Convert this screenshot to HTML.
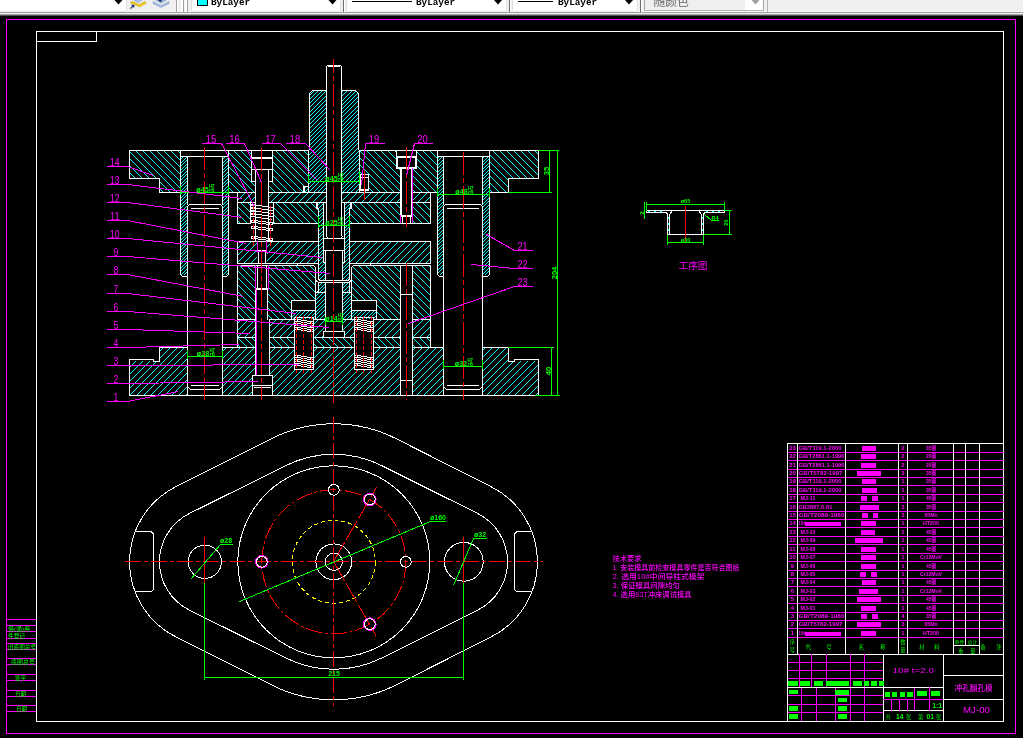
<!DOCTYPE html>
<html><head><meta charset="utf-8"><title>CAD</title>
<style>
html,body{margin:0;padding:0;background:#000;overflow:hidden}
svg{display:block;will-change:transform}
text{white-space:pre}
</style></head><body>
<svg width="1023" height="738" viewBox="0 0 1023 738" shape-rendering="crispEdges" fill="none">
<rect width="1023" height="738" fill="#000"/>
<defs><pattern id="h0" width="7" height="7" patternUnits="userSpaceOnUse"><path d="M6 0h1v1h-1zM0 1h1v1h-1zM1 2h1v1h-1zM2 3h1v1h-1zM3 4h1v1h-1zM4 5h1v1h-1zM5 6h1v1h-1z" fill="#0ff"/></pattern><pattern id="h1" width="7" height="7" patternUnits="userSpaceOnUse"><path d="M3 0h1v1h-1zM2 1h1v1h-1zM1 2h1v1h-1zM0 3h1v1h-1zM6 4h1v1h-1zM5 5h1v1h-1zM4 6h1v1h-1z" fill="#0ff"/></pattern><pattern id="h2" width="7" height="7" patternUnits="userSpaceOnUse"><path d="M3 0h1v1h-1zM4 1h1v1h-1zM5 2h1v1h-1zM6 3h1v1h-1zM0 4h1v1h-1zM1 5h1v1h-1zM2 6h1v1h-1z" fill="#0ff"/></pattern><pattern id="h3" width="7" height="7" patternUnits="userSpaceOnUse"><path d="M2 0h1v1h-1zM1 1h1v1h-1zM0 2h1v1h-1zM6 3h1v1h-1zM5 4h1v1h-1zM4 5h1v1h-1zM3 6h1v1h-1z" fill="#0ff"/></pattern><pattern id="h4" width="7" height="7" patternUnits="userSpaceOnUse"><path d="M2 0h1v1h-1zM3 1h1v1h-1zM4 2h1v1h-1zM5 3h1v1h-1zM6 4h1v1h-1zM0 5h1v1h-1zM1 6h1v1h-1z" fill="#0ff"/></pattern><pattern id="h5" width="7" height="7" patternUnits="userSpaceOnUse"><path d="M0 0h1v1h-1zM6 1h1v1h-1zM5 2h1v1h-1zM4 3h1v1h-1zM3 4h1v1h-1zM2 5h1v1h-1zM1 6h1v1h-1z" fill="#0ff"/></pattern><pattern id="h6" width="7" height="7" patternUnits="userSpaceOnUse"><path d="M5 0h1v1h-1zM6 1h1v1h-1zM0 2h1v1h-1zM1 3h1v1h-1zM2 4h1v1h-1zM3 5h1v1h-1zM4 6h1v1h-1z" fill="#0ff"/></pattern><pattern id="h7" width="7" height="7" patternUnits="userSpaceOnUse"><path d="M6 0h1v1h-1zM5 1h1v1h-1zM4 2h1v1h-1zM3 3h1v1h-1zM2 4h1v1h-1zM1 5h1v1h-1zM0 6h1v1h-1z" fill="#0ff"/></pattern><pattern id="h8" width="7" height="7" patternUnits="userSpaceOnUse"><path d="M0 0h1v1h-1zM3 0h1v1h-1zM6 1h1v1h-1zM2 1h1v1h-1zM5 2h1v1h-1zM1 2h1v1h-1zM4 3h1v1h-1zM0 3h1v1h-1zM3 4h1v1h-1zM6 4h1v1h-1zM2 5h1v1h-1zM5 5h1v1h-1zM1 6h1v1h-1zM4 6h1v1h-1z" fill="#0ff"/></pattern><pattern id="h9" width="21" height="21" patternUnits="userSpaceOnUse"><path d="M1 0h1v1h-1zM5 0h1v1h-1zM9 0h1v1h-1zM13 0h1v1h-1zM17 0h1v1h-1zM0 1h1v1h-1zM4 1h1v1h-1zM8 1h1v1h-1zM12 1h1v1h-1zM16 1h1v1h-1zM20 2h1v1h-1zM3 2h1v1h-1zM7 2h1v1h-1zM11 2h1v1h-1zM15 2h1v1h-1zM19 3h1v1h-1zM2 3h1v1h-1zM6 3h1v1h-1zM10 3h1v1h-1zM14 3h1v1h-1zM18 4h1v1h-1zM1 4h1v1h-1zM5 4h1v1h-1zM9 4h1v1h-1zM13 4h1v1h-1zM17 5h1v1h-1zM0 5h1v1h-1zM4 5h1v1h-1zM8 5h1v1h-1zM12 5h1v1h-1zM16 6h1v1h-1zM20 6h1v1h-1zM3 6h1v1h-1zM7 6h1v1h-1zM11 6h1v1h-1zM15 7h1v1h-1zM19 7h1v1h-1zM2 7h1v1h-1zM6 7h1v1h-1zM10 7h1v1h-1zM14 8h1v1h-1zM18 8h1v1h-1zM1 8h1v1h-1zM5 8h1v1h-1zM9 8h1v1h-1zM13 9h1v1h-1zM17 9h1v1h-1zM0 9h1v1h-1zM4 9h1v1h-1zM8 9h1v1h-1zM12 10h1v1h-1zM16 10h1v1h-1zM20 10h1v1h-1zM3 10h1v1h-1zM7 10h1v1h-1zM11 11h1v1h-1zM15 11h1v1h-1zM19 11h1v1h-1zM2 11h1v1h-1zM6 11h1v1h-1zM10 12h1v1h-1zM14 12h1v1h-1zM18 12h1v1h-1zM1 12h1v1h-1zM5 12h1v1h-1zM9 13h1v1h-1zM13 13h1v1h-1zM17 13h1v1h-1zM0 13h1v1h-1zM4 13h1v1h-1zM8 14h1v1h-1zM12 14h1v1h-1zM16 14h1v1h-1zM20 14h1v1h-1zM3 14h1v1h-1zM7 15h1v1h-1zM11 15h1v1h-1zM15 15h1v1h-1zM19 15h1v1h-1zM2 15h1v1h-1zM6 16h1v1h-1zM10 16h1v1h-1zM14 16h1v1h-1zM18 16h1v1h-1zM1 16h1v1h-1zM5 17h1v1h-1zM9 17h1v1h-1zM13 17h1v1h-1zM17 17h1v1h-1zM0 17h1v1h-1zM4 18h1v1h-1zM8 18h1v1h-1zM12 18h1v1h-1zM16 18h1v1h-1zM20 18h1v1h-1zM3 19h1v1h-1zM7 19h1v1h-1zM11 19h1v1h-1zM15 19h1v1h-1zM19 19h1v1h-1zM2 20h1v1h-1zM6 20h1v1h-1zM10 20h1v1h-1zM14 20h1v1h-1zM18 20h1v1h-1z" fill="#0ff"/></pattern><pattern id="h10" width="19" height="19" patternUnits="userSpaceOnUse"><path d="M2 0h1v1h-1zM5 0h1v1h-1zM9 0h1v1h-1zM13 0h1v1h-1zM17 0h1v1h-1zM1 1h1v1h-1zM4 1h1v1h-1zM8 1h1v1h-1zM12 1h1v1h-1zM16 1h1v1h-1zM0 2h1v1h-1zM3 2h1v1h-1zM7 2h1v1h-1zM11 2h1v1h-1zM15 2h1v1h-1zM18 3h1v1h-1zM2 3h1v1h-1zM6 3h1v1h-1zM10 3h1v1h-1zM14 3h1v1h-1zM17 4h1v1h-1zM1 4h1v1h-1zM5 4h1v1h-1zM9 4h1v1h-1zM13 4h1v1h-1zM16 5h1v1h-1zM0 5h1v1h-1zM4 5h1v1h-1zM8 5h1v1h-1zM12 5h1v1h-1zM15 6h1v1h-1zM18 6h1v1h-1zM3 6h1v1h-1zM7 6h1v1h-1zM11 6h1v1h-1zM14 7h1v1h-1zM17 7h1v1h-1zM2 7h1v1h-1zM6 7h1v1h-1zM10 7h1v1h-1zM13 8h1v1h-1zM16 8h1v1h-1zM1 8h1v1h-1zM5 8h1v1h-1zM9 8h1v1h-1zM12 9h1v1h-1zM15 9h1v1h-1zM0 9h1v1h-1zM4 9h1v1h-1zM8 9h1v1h-1zM11 10h1v1h-1zM14 10h1v1h-1zM18 10h1v1h-1zM3 10h1v1h-1zM7 10h1v1h-1zM10 11h1v1h-1zM13 11h1v1h-1zM17 11h1v1h-1zM2 11h1v1h-1zM6 11h1v1h-1zM9 12h1v1h-1zM12 12h1v1h-1zM16 12h1v1h-1zM1 12h1v1h-1zM5 12h1v1h-1zM8 13h1v1h-1zM11 13h1v1h-1zM15 13h1v1h-1zM0 13h1v1h-1zM4 13h1v1h-1zM7 14h1v1h-1zM10 14h1v1h-1zM14 14h1v1h-1zM18 14h1v1h-1zM3 14h1v1h-1zM6 15h1v1h-1zM9 15h1v1h-1zM13 15h1v1h-1zM17 15h1v1h-1zM2 15h1v1h-1zM5 16h1v1h-1zM8 16h1v1h-1zM12 16h1v1h-1zM16 16h1v1h-1zM1 16h1v1h-1zM4 17h1v1h-1zM7 17h1v1h-1zM11 17h1v1h-1zM15 17h1v1h-1zM0 17h1v1h-1zM3 18h1v1h-1zM6 18h1v1h-1zM10 18h1v1h-1zM14 18h1v1h-1zM18 18h1v1h-1z" fill="#0ff"/></pattern><pattern id="h11" width="19" height="19" patternUnits="userSpaceOnUse"><path d="M0 0h1v1h-1zM3 0h1v1h-1zM7 0h1v1h-1zM11 0h1v1h-1zM15 0h1v1h-1zM18 1h1v1h-1zM2 1h1v1h-1zM6 1h1v1h-1zM10 1h1v1h-1zM14 1h1v1h-1zM17 2h1v1h-1zM1 2h1v1h-1zM5 2h1v1h-1zM9 2h1v1h-1zM13 2h1v1h-1zM16 3h1v1h-1zM0 3h1v1h-1zM4 3h1v1h-1zM8 3h1v1h-1zM12 3h1v1h-1zM15 4h1v1h-1zM18 4h1v1h-1zM3 4h1v1h-1zM7 4h1v1h-1zM11 4h1v1h-1zM14 5h1v1h-1zM17 5h1v1h-1zM2 5h1v1h-1zM6 5h1v1h-1zM10 5h1v1h-1zM13 6h1v1h-1zM16 6h1v1h-1zM1 6h1v1h-1zM5 6h1v1h-1zM9 6h1v1h-1zM12 7h1v1h-1zM15 7h1v1h-1zM0 7h1v1h-1zM4 7h1v1h-1zM8 7h1v1h-1zM11 8h1v1h-1zM14 8h1v1h-1zM18 8h1v1h-1zM3 8h1v1h-1zM7 8h1v1h-1zM10 9h1v1h-1zM13 9h1v1h-1zM17 9h1v1h-1zM2 9h1v1h-1zM6 9h1v1h-1zM9 10h1v1h-1zM12 10h1v1h-1zM16 10h1v1h-1zM1 10h1v1h-1zM5 10h1v1h-1zM8 11h1v1h-1zM11 11h1v1h-1zM15 11h1v1h-1zM0 11h1v1h-1zM4 11h1v1h-1zM7 12h1v1h-1zM10 12h1v1h-1zM14 12h1v1h-1zM18 12h1v1h-1zM3 12h1v1h-1zM6 13h1v1h-1zM9 13h1v1h-1zM13 13h1v1h-1zM17 13h1v1h-1zM2 13h1v1h-1zM5 14h1v1h-1zM8 14h1v1h-1zM12 14h1v1h-1zM16 14h1v1h-1zM1 14h1v1h-1zM4 15h1v1h-1zM7 15h1v1h-1zM11 15h1v1h-1zM15 15h1v1h-1zM0 15h1v1h-1zM3 16h1v1h-1zM6 16h1v1h-1zM10 16h1v1h-1zM14 16h1v1h-1zM18 16h1v1h-1zM2 17h1v1h-1zM5 17h1v1h-1zM9 17h1v1h-1zM13 17h1v1h-1zM17 17h1v1h-1zM1 18h1v1h-1zM4 18h1v1h-1zM8 18h1v1h-1zM12 18h1v1h-1zM16 18h1v1h-1z" fill="#0ff"/></pattern></defs>
<rect x="0" y="0" width="1023" height="12" fill="#f0f0f0"/>
<rect x="0" y="11" width="1023" height="1" fill="#f8f8f8"/>
<rect x="0" y="12" width="1023" height="1" fill="#a0a0a0"/>
<rect x="0" y="13" width="1023" height="1" fill="#f0f0f0"/>
<rect x="0" y="14" width="1023" height="1" fill="#a4a4a4"/>
<rect x="0" y="15" width="1023" height="1" fill="#505050"/>
<rect x="0" y="0" width="126" height="11" fill="#fff"/>
<rect x="-1" y="0" width="1" height="11" fill="#d9dde6"/>
<rect x="126" y="0" width="1" height="11" fill="#e3e3e3"/>
<rect x="0" y="11" width="126" height="1" fill="#e9e9e9"/>
<path d="M114.5 0H122.5L118.5 4.5Z" fill="#000" shape-rendering="geometricPrecision"/>
<rect x="176" y="0" width="1" height="12" fill="#a0a0a0"/>
<rect x="177" y="0" width="1" height="12" fill="#fff"/>
<rect x="181" y="0" width="2" height="12" fill="#fff"/>
<rect x="183" y="0" width="1" height="12" fill="#a0a0a0"/>
<rect x="185" y="0" width="2" height="12" fill="#fff"/>
<rect x="187" y="0" width="1" height="12" fill="#a0a0a0"/>
<g shape-rendering="geometricPrecision"><path d="M132 -1L138 2.5L144 -1Z" fill="#a9c3e6" stroke="#6f8fc0" stroke-width=".5"/><path d="M130 2.6L132.5 1.6L139 4.4L145 1.6L146.2 3L140 6.9Z" fill="#f2d21f" stroke="#b79600" stroke-width=".5"/><path d="M130.4 8.6L133.6 5.4M131.4 5.2H133.8V7.6" stroke="#1c2f7a" stroke-width="1.1" fill="none"/><path d="M154 -1L161 3L168 -1Z" fill="#9db9de" stroke="#5b7cab" stroke-width=".5"/><path d="M153 1.6L161 5.4L169 1.6L169 3.6L161 7.6L153 3.6Z" fill="#c4d6ee" stroke="#6a8cc0" stroke-width=".5"/><path d="M153 2.6L161 6.4L169 2.6" stroke="#6a8cc0" stroke-width=".5" fill="none"/><path d="M158 0H162.4L160.2 2.2Z" fill="#1c2f7a"/></g>
<rect x="192" y="0" width="148" height="11" fill="#fff"/>
<rect x="191" y="0" width="1" height="11" fill="#d9dde6"/>
<rect x="340" y="0" width="1" height="11" fill="#e3e3e3"/>
<rect x="192" y="11" width="148" height="1" fill="#e9e9e9"/>
<rect x="197" y="0" width="11" height="6" fill="#000"/>
<rect x="198" y="0" width="9" height="5" fill="#0ff"/>
<text x="211" y="4.8" fill="#000" font-size="9.3" font-family="'Liberation Mono','Noto Sans CJK SC',monospace" text-anchor="start" font-weight="bold">ByLayer</text>
<path d="M328.5 0H336.5L332.5 4.5Z" fill="#000" shape-rendering="geometricPrecision"/>
<rect x="343" y="0" width="1" height="12" fill="#6d6d6d"/>
<rect x="344" y="0" width="1" height="12" fill="#fff"/>
<rect x="347" y="0" width="159" height="11" fill="#fff"/>
<rect x="346" y="0" width="1" height="11" fill="#d9dde6"/>
<rect x="506" y="0" width="1" height="11" fill="#e3e3e3"/>
<rect x="347" y="11" width="159" height="1" fill="#e9e9e9"/>
<rect x="352" y="1" width="60" height="1" fill="#000"/>
<text x="416" y="4.8" fill="#000" font-size="9.3" font-family="'Liberation Mono','Noto Sans CJK SC',monospace" text-anchor="start" font-weight="bold">ByLayer</text>
<path d="M494 0H502L498 4.5Z" fill="#000" shape-rendering="geometricPrecision"/>
<rect x="509" y="0" width="1" height="12" fill="#6d6d6d"/>
<rect x="510" y="0" width="1" height="12" fill="#fff"/>
<rect x="513" y="0" width="124" height="11" fill="#fff"/>
<rect x="512" y="0" width="1" height="11" fill="#d9dde6"/>
<rect x="637" y="0" width="1" height="11" fill="#e3e3e3"/>
<rect x="513" y="11" width="124" height="1" fill="#e9e9e9"/>
<rect x="518" y="1" width="35" height="1" fill="#000"/>
<text x="558" y="4.8" fill="#000" font-size="9.3" font-family="'Liberation Mono','Noto Sans CJK SC',monospace" text-anchor="start" font-weight="bold">ByLayer</text>
<path d="M625 0H633L629 4.5Z" fill="#000" shape-rendering="geometricPrecision"/>
<rect x="640" y="0" width="1" height="12" fill="#6d6d6d"/>
<rect x="641" y="0" width="1" height="12" fill="#fff"/>
<rect x="645" y="0" width="100" height="10" fill="#efefef"/>
<rect x="745" y="0" width="18" height="10" fill="#fff"/>
<rect x="644" y="0" width="1" height="11" fill="#a6a6a6"/>
<rect x="763" y="0" width="1" height="11" fill="#a6a6a6"/>
<rect x="644" y="10" width="120" height="1" fill="#b4b4b4"/>
<rect x="767" y="0" width="1" height="12" fill="#b4b4b4"/>
<text x="653.5" y="6.2" fill="#666" font-size="11.8" font-family="'Liberation Sans','Noto Sans CJK SC',sans-serif" text-anchor="start" opacity=".99">随颜色</text>
<path d="M751.5 0H759.5L755.5 4.5Z" fill="#a0a0a0" shape-rendering="geometricPrecision"/>
<path d="M6 19.5H1016" stroke="#f0f" stroke-width="1"/>
<path d="M6.5 19V734" stroke="#f0f" stroke-width="1"/>
<path d="M1015.5 19V734" stroke="#f0f" stroke-width="1"/>
<path d="M6 733.5H1016" stroke="#f0f" stroke-width="1"/>
<path d="M36 31.5H1004" stroke="#fff" stroke-width="1"/>
<path d="M36.5 31V722" stroke="#fff" stroke-width="1"/>
<path d="M1003.5 31V722" stroke="#fff" stroke-width="1"/>
<path d="M36 721.5H1004" stroke="#fff" stroke-width="1"/>
<path d="M36 41.5H97" stroke="#fff" stroke-width="1"/>
<path d="M96.5 31V42" stroke="#fff" stroke-width="1"/>
<path d="M7 619.5H36" stroke="#f0f" stroke-width="1"/>
<path d="M7 625.5H36" stroke="#f0f" stroke-width="1"/>
<path d="M7 631.5H36" stroke="#f0f" stroke-width="1"/>
<path d="M7 638.5H36" stroke="#f0f" stroke-width="1"/>
<path d="M7 643.5H36" stroke="#f0f" stroke-width="1"/>
<path d="M7 649.5H36" stroke="#f0f" stroke-width="1"/>
<path d="M7 658.5H36" stroke="#f0f" stroke-width="1"/>
<path d="M7 664.5H36" stroke="#f0f" stroke-width="1"/>
<path d="M7 674.5H36" stroke="#f0f" stroke-width="1"/>
<path d="M7 680.5H36" stroke="#f0f" stroke-width="1"/>
<path d="M7 690.5H36" stroke="#f0f" stroke-width="1"/>
<path d="M7 696.5H36" stroke="#f0f" stroke-width="1"/>
<path d="M7 705.5H36" stroke="#f0f" stroke-width="1"/>
<path d="M7 711.5H36" stroke="#f0f" stroke-width="1"/>
<text x="8" y="630.6" fill="#0f0" font-size="6.2" font-family="'Liberation Sans','Noto Sans CJK SC',sans-serif" text-anchor="start" textLength="22" lengthAdjust="spacingAndGlyphs">借(通)用</text>
<text x="8" y="637.6" fill="#0f0" font-size="6.2" font-family="'Liberation Sans','Noto Sans CJK SC',sans-serif" text-anchor="start" textLength="17" lengthAdjust="spacingAndGlyphs">件登记</text>
<text x="8" y="648.6" fill="#0f0" font-size="6.2" font-family="'Liberation Sans','Noto Sans CJK SC',sans-serif" text-anchor="start" textLength="28" lengthAdjust="spacingAndGlyphs">旧底图总号</text>
<text x="11" y="663.6" fill="#0f0" font-size="6.2" font-family="'Liberation Sans','Noto Sans CJK SC',sans-serif" text-anchor="start" textLength="24" lengthAdjust="spacingAndGlyphs">底图总号</text>
<text x="15" y="679.6" fill="#0f0" font-size="6.2" font-family="'Liberation Sans','Noto Sans CJK SC',sans-serif" text-anchor="start" textLength="11" lengthAdjust="spacingAndGlyphs">签字</text>
<text x="15" y="695.6" fill="#0f0" font-size="6.2" font-family="'Liberation Sans','Noto Sans CJK SC',sans-serif" text-anchor="start" textLength="11" lengthAdjust="spacingAndGlyphs">日期</text>
<text x="16" y="710.6" fill="#0f0" font-size="6.2" font-family="'Liberation Sans','Noto Sans CJK SC',sans-serif" text-anchor="start" textLength="11" lengthAdjust="spacingAndGlyphs">日期</text>
<rect x="130" y="151" width="408" height="41" fill="url(#h0)"/>
<rect x="100" y="179" width="59" height="15" fill="#000"/>
<rect x="509" y="179" width="51" height="15" fill="#000"/>
<rect x="180" y="150" width="49" height="43" fill="#000"/>
<rect x="437" y="150" width="53" height="43" fill="#000"/>
<rect x="251" y="150" width="22" height="31" fill="#000"/>
<rect x="255" y="181" width="14" height="12" fill="#000"/>
<rect x="396" y="150" width="21" height="18" fill="#000"/>
<rect x="400" y="168" width="13" height="25" fill="#000"/>
<rect x="308" y="150" width="52" height="43" fill="#000"/>
<rect x="303" y="186" width="6" height="7" fill="#000"/>
<rect x="360" y="174" width="9" height="16" fill="#000"/>
<rect x="238" y="193" width="192" height="9" fill="url(#h1)"/>
<rect x="255" y="192" width="14" height="11" fill="#000"/>
<rect x="326" y="192" width="16" height="11" fill="#000"/>
<rect x="400" y="192" width="13" height="11" fill="#000"/>
<rect x="238" y="203" width="192" height="20" fill="url(#h2)"/>
<rect x="250" y="202" width="24" height="22" fill="#000"/>
<rect x="316" y="202" width="37" height="7" fill="#000"/>
<rect x="318" y="208" width="32" height="16" fill="#000"/>
<rect x="400" y="202" width="13" height="22" fill="#000"/>
<rect x="238" y="242" width="192" height="21" fill="url(#h3)"/>
<rect x="257" y="241" width="10" height="23" fill="#000"/>
<rect x="318" y="241" width="32" height="23" fill="#000"/>
<rect x="238" y="266" width="192" height="53" fill="url(#h4)"/>
<rect x="255" y="265" width="13" height="55" fill="#000"/>
<rect x="315" y="265" width="37" height="55" fill="#000"/>
<rect x="291" y="300" width="86" height="20" fill="#000"/>
<rect x="400" y="265" width="13" height="55" fill="#000"/>
<rect x="294" y="317" width="20" height="3" fill="#000"/>
<rect x="354" y="317" width="20" height="3" fill="#000"/>
<rect x="238" y="320" width="192" height="17" fill="url(#h5)"/>
<rect x="238" y="338" width="192" height="9" fill="url(#h6)"/>
<rect x="130" y="348" width="408" height="47" fill="url(#h7)"/>
<rect x="100" y="340" width="59" height="21" fill="#000"/>
<rect x="100" y="340" width="53" height="19" fill="#000"/>
<rect x="509" y="340" width="51" height="21" fill="#000"/>
<rect x="515" y="340" width="45" height="19" fill="#000"/>
<rect x="187" y="347" width="36" height="49" fill="#000"/>
<rect x="443" y="347" width="40" height="49" fill="#000"/>
<rect x="256" y="319" width="14" height="57" fill="#000"/>
<rect x="252" y="375" width="21" height="21" fill="#000"/>
<rect x="294" y="319" width="20" height="51" fill="#000"/>
<rect x="354" y="319" width="20" height="51" fill="#000"/>
<rect x="400" y="319" width="13" height="77" fill="#000"/>
<rect x="325" y="319" width="18" height="13" fill="#000"/>
<rect x="323" y="331" width="22" height="7" fill="#000"/>
<rect x="181" y="157" width="6" height="118" fill="url(#h8)"/>
<rect x="223" y="157" width="5" height="118" fill="url(#h8)"/>
<rect x="438" y="157" width="5" height="118" fill="url(#h8)"/>
<rect x="483" y="157" width="6" height="118" fill="url(#h8)"/>
<rect x="310" y="91" width="16" height="59" fill="url(#h9)"/>
<rect x="342" y="91" width="16" height="59" fill="url(#h9)"/>
<rect x="309" y="150" width="17" height="42" fill="url(#h9)"/>
<rect x="342" y="150" width="17" height="42" fill="url(#h9)"/>
<rect x="305" y="187" width="4" height="5" fill="url(#h9)"/>
<rect x="319" y="203" width="4" height="77" fill="url(#h10)"/>
<rect x="345" y="203" width="4" height="77" fill="url(#h10)"/>
<rect x="317" y="203" width="2" height="5" fill="url(#h10)"/>
<rect x="349" y="203" width="2" height="5" fill="url(#h10)"/>
<rect x="323" y="263" width="2" height="17" fill="url(#h10)"/>
<rect x="343" y="263" width="2" height="17" fill="url(#h10)"/>
<rect x="318" y="283" width="7" height="9" fill="url(#h11)"/>
<rect x="343" y="283" width="7" height="9" fill="url(#h11)"/>
<rect x="316" y="292" width="9" height="19" fill="url(#h11)"/>
<rect x="343" y="292" width="8" height="19" fill="url(#h11)"/>
<rect x="292" y="311" width="33" height="8" fill="url(#h11)"/>
<rect x="343" y="311" width="33" height="8" fill="url(#h11)"/>
<path d="M180.5 150.5L129.5 150.5L129.5 178.5L159.5 178.5L159.5 192.5L180.5 192.5" stroke="#fff" stroke-width="1" fill="none"/>
<path d="M489.5 150.5L538.5 150.5L538.5 178.5L508.5 178.5L508.5 192.5L489.5 192.5" stroke="#fff" stroke-width="1" fill="none"/>
<path d="M228 150.5H309" stroke="#fff" stroke-width="1"/>
<path d="M359 150.5H438" stroke="#fff" stroke-width="1"/>
<path d="M180 150.5H229" stroke="#fff" stroke-width="1"/>
<path d="M437 150.5H490" stroke="#fff" stroke-width="1"/>
<path d="M228 192.5H438" stroke="#fff" stroke-width="1"/>
<path d="M180 156.5H229" stroke="#fff" stroke-width="1"/>
<path d="M180.5 150V275" stroke="#fff" stroke-width="1"/>
<path d="M228.5 150V275" stroke="#fff" stroke-width="1"/>
<path d="M180.5 274.5L182.5 276.5L187.5 276.5" stroke="#fff" stroke-width="1" fill="none"/>
<path d="M228.5 274.5L226.5 276.5L222.5 276.5" stroke="#fff" stroke-width="1" fill="none"/>
<path d="M187.5 156V205" stroke="#fff" stroke-width="1"/>
<path d="M222.5 156V205" stroke="#fff" stroke-width="1"/>
<path d="M187.5 395.5L187.5 206.5L189.5 204.5L220.5 204.5L222.5 206.5L222.5 395.5" stroke="#fff" stroke-width="1" fill="none"/>
<path d="M191 208.5H219" stroke="#fff" stroke-width="1"/>
<path d="M187.5 386.5L190.5 389.5L219.5 389.5L222.5 386.5" stroke="#fff" stroke-width="1" fill="none"/>
<path d="M191 385.5H219" stroke="#fff" stroke-width="1"/>
<path d="M437 156.5H490" stroke="#fff" stroke-width="1"/>
<path d="M437.5 150V275" stroke="#fff" stroke-width="1"/>
<path d="M489.5 150V275" stroke="#fff" stroke-width="1"/>
<path d="M437.5 274.5L439.5 276.5L443.5 276.5" stroke="#fff" stroke-width="1" fill="none"/>
<path d="M489.5 274.5L487.5 276.5L482.5 276.5" stroke="#fff" stroke-width="1" fill="none"/>
<path d="M443.5 156V205" stroke="#fff" stroke-width="1"/>
<path d="M482.5 156V205" stroke="#fff" stroke-width="1"/>
<path d="M443.5 395.5L443.5 206.5L445.5 204.5L480.5 204.5L482.5 206.5L482.5 395.5" stroke="#fff" stroke-width="1" fill="none"/>
<path d="M447 208.5H479" stroke="#fff" stroke-width="1"/>
<path d="M443.5 386.5L446.5 389.5L479.5 389.5L482.5 386.5" stroke="#fff" stroke-width="1" fill="none"/>
<path d="M447 385.5H479" stroke="#fff" stroke-width="1"/>
<path d="M308.5 192V150.5M309.5 150V93.5L312.5 90.5H326M342 90.5H355.5L358.5 93.5V150M359.5 150.5V192" stroke="#fff" stroke-width="1" fill="none"/>
<path d="M308.5 186.5L303.5 186.5L303.5 192.5" stroke="#fff" stroke-width="1" fill="none"/>
<path d="M304.5 187V193" stroke="#fff" stroke-width="1"/>
<path d="M360.5 174V191" stroke="#fff" stroke-width="1"/>
<path d="M368.5 174V191" stroke="#fff" stroke-width="1"/>
<path d="M360 174.5H369" stroke="#fff" stroke-width="1"/>
<path d="M360 190H369" stroke="#fff" stroke-width="2"/>
<path d="M360 177.5H369" stroke="#fff" stroke-width="1"/>
<path d="M251.5 150V182" stroke="#fff" stroke-width="1"/>
<path d="M272.5 150V182" stroke="#fff" stroke-width="1"/>
<path d="M251 158H273" stroke="#fff" stroke-width="2"/>
<path d="M251 169.5H273" stroke="#fff" stroke-width="1"/>
<path d="M251 181.5H256" stroke="#fff" stroke-width="1"/>
<path d="M268 181.5H273" stroke="#fff" stroke-width="1"/>
<path d="M255.5 169V242" stroke="#fff" stroke-width="1"/>
<path d="M268.5 169V242" stroke="#fff" stroke-width="1"/>
<path d="M396.5 150V169" stroke="#fff" stroke-width="1"/>
<path d="M416.5 150V169" stroke="#fff" stroke-width="1"/>
<path d="M396 157H417" stroke="#fff" stroke-width="2"/>
<path d="M396 168H417" stroke="#fff" stroke-width="2"/>
<path d="M397.5 157V169" stroke="#fff" stroke-width="1"/>
<path d="M415.5 157V169" stroke="#fff" stroke-width="1"/>
<path d="M401 168V216" stroke="#fff" stroke-width="2"/>
<path d="M411.5 168V216" stroke="#fff" stroke-width="1"/>
<path d="M412.5 168V216" stroke="#f0f" stroke-width="1"/>
<path d="M400 216H413" stroke="#fff" stroke-width="2"/>
<path d="M400.5 215V224" stroke="#f0f" stroke-width="1"/>
<path d="M412.5 215V224" stroke="#f0f" stroke-width="1"/>
<path d="M402.5 216V224" stroke="#fff" stroke-width="1"/>
<path d="M410.5 216V224" stroke="#fff" stroke-width="1"/>
<path d="M237.5 192V224" stroke="#fff" stroke-width="1"/>
<path d="M430.5 192V224" stroke="#fff" stroke-width="1"/>
<path d="M237 202.5H431" stroke="#fff" stroke-width="1"/>
<path d="M237 223.5H251" stroke="#fff" stroke-width="1"/>
<path d="M273 223.5H319" stroke="#fff" stroke-width="1"/>
<path d="M349 223.5H431" stroke="#fff" stroke-width="1"/>
<path d="M250.5 202V224" stroke="#fff" stroke-width="1"/>
<path d="M273.5 202V224" stroke="#fff" stroke-width="1"/>
<rect x="402" y="192" width="9" height="11" fill="#000"/>
<rect x="256" y="192" width="12" height="11" fill="#000"/>
<path d="M318.5 208.5L316.5 208.5L316.5 202.5" stroke="#fff" stroke-width="1" fill="none"/>
<path d="M349.5 208.5L351.5 208.5L351.5 202.5" stroke="#fff" stroke-width="1" fill="none"/>
<path d="M317.5 203V209" stroke="#fff" stroke-width="1"/>
<path d="M350.5 203V209" stroke="#fff" stroke-width="1"/>
<path d="M318.5 208V277.5Q318.5 280.5 321.5 280.5H346.5Q349.5 280.5 349.5 277.5V208" stroke="#fff" stroke-width="1" fill="none"/>
<path d="M323.5 202V263" stroke="#fff" stroke-width="1"/>
<path d="M344.5 202V263" stroke="#fff" stroke-width="1"/>
<path d="M323 238.5H345" stroke="#fff" stroke-width="1"/>
<path d="M323 250.5H345" stroke="#fff" stroke-width="1"/>
<path d="M323.5 262.5L325.5 262.5" stroke="#fff" stroke-width="1" fill="none"/>
<path d="M342.5 262.5L344.5 262.5" stroke="#fff" stroke-width="1" fill="none"/>
<path d="M325.5 250V281" stroke="#fff" stroke-width="1"/>
<path d="M342.5 250V281" stroke="#fff" stroke-width="1"/>
<path d="M325.5 283V332" stroke="#fff" stroke-width="1"/>
<path d="M342.5 283V332" stroke="#fff" stroke-width="1"/>
<rect x="323.5" y="331.5" width="21" height="6" stroke="#fff" stroke-width="1" fill="none"/>
<path d="M237.5 241V264" stroke="#fff" stroke-width="1"/>
<path d="M430.5 241V264" stroke="#fff" stroke-width="1"/>
<path d="M237 241.5H319" stroke="#fff" stroke-width="1"/>
<path d="M349 241.5H431" stroke="#fff" stroke-width="1"/>
<path d="M237 263.5H319" stroke="#fff" stroke-width="1"/>
<path d="M349 263.5H431" stroke="#fff" stroke-width="1"/>
<path d="M257.5 241V252" stroke="#f0f" stroke-width="1"/>
<path d="M266.5 241V252" stroke="#f0f" stroke-width="1"/>
<path d="M258 251H266" stroke="#fff" stroke-width="2"/>
<path d="M258.5 251V264" stroke="#fff" stroke-width="1"/>
<path d="M265.5 251V264" stroke="#fff" stroke-width="1"/>
<path d="M237.5 265V348" stroke="#fff" stroke-width="1"/>
<path d="M430.5 265V348" stroke="#fff" stroke-width="1"/>
<path d="M237 265.5H313" stroke="#fff" stroke-width="1"/>
<path d="M355 265.5H431" stroke="#fff" stroke-width="1"/>
<path d="M297.5 263V266" stroke="#fff" stroke-width="1"/>
<path d="M370.5 263V266" stroke="#fff" stroke-width="1"/>
<path d="M312 265.5Q315.5 265.5 315.5 269.5V319" stroke="#fff" stroke-width="1" fill="none"/>
<path d="M355 265.5Q351.5 265.5 351.5 269.5V319" stroke="#fff" stroke-width="1" fill="none"/>
<path d="M318.5 283V290Q318.5 292.5 316 292.5M316 292.5H325" stroke="#fff" stroke-width="1" fill="none"/>
<path d="M349.5 283V290Q349.5 292.5 351 292.5M351 292.5H343" stroke="#fff" stroke-width="1" fill="none"/>
<path d="M315.5 278Q316 282.5 320.5 282.5H347.5Q351 282.5 351.5 278" stroke="#fff" stroke-width="1" fill="none"/>
<rect x="291.5" y="300.5" width="24" height="10" stroke="#fff" stroke-width="1" fill="none"/>
<rect x="351.5" y="300.5" width="25" height="10" stroke="#fff" stroke-width="1" fill="none"/>
<path d="M291.5 310V320" stroke="#fff" stroke-width="1"/>
<path d="M376.5 310V320" stroke="#fff" stroke-width="1"/>
<path d="M237 319.5H431" stroke="#fff" stroke-width="1"/>
<path d="M237 337.5H431" stroke="#fff" stroke-width="1"/>
<path d="M159 347.5H509" stroke="#fff" stroke-width="1"/>
<rect x="256" y="319" width="13" height="30" fill="#000"/>
<rect x="295" y="319" width="18" height="30" fill="#000"/>
<rect x="355" y="319" width="18" height="30" fill="#000"/>
<rect x="401" y="319" width="11" height="30" fill="#000"/>
<rect x="326" y="319" width="16" height="12" fill="#000"/>
<rect x="188" y="347" width="34" height="2" fill="#000"/>
<rect x="444" y="347" width="38" height="2" fill="#000"/>
<path d="M255.5 265V290" stroke="#f0f" stroke-width="1"/>
<path d="M268.5 265V290" stroke="#f0f" stroke-width="1"/>
<path d="M257.5 265V290" stroke="#fff" stroke-width="1"/>
<path d="M266.5 265V290" stroke="#fff" stroke-width="1"/>
<path d="M256 289H268" stroke="#fff" stroke-width="2"/>
<path d="M255.5 290V376" stroke="#fff" stroke-width="1"/>
<path d="M256.5 290V376" stroke="#f0f" stroke-width="1"/>
<path d="M267.5 290V320" stroke="#fff" stroke-width="1"/>
<path d="M269.5 319V376" stroke="#fff" stroke-width="1"/>
<rect x="252.5" y="375.5" width="20" height="20" stroke="#fff" stroke-width="1" fill="none"/>
<path d="M252 385.5H273" stroke="#fff" stroke-width="1"/>
<path d="M254 387.5H271" stroke="#fff" stroke-width="1"/>
<path d="M400.5 265V396" stroke="#fff" stroke-width="1"/>
<path d="M412.5 265V396" stroke="#fff" stroke-width="1"/>
<path d="M400 294.5H413" stroke="#fff" stroke-width="1"/>
<path d="M400 380.5H413" stroke="#fff" stroke-width="1"/>
<path d="M187.5 347.5L159.5 347.5L159.5 361.5L153.5 361.5L153.5 359.5L129.5 359.5L129.5 395.5L538.5 395.5L538.5 359.5L514.5 359.5L514.5 361.5L508.5 361.5L508.5 347.5L482.5 347.5" stroke="#fff" stroke-width="1" fill="none"/>
<path d="M294.5 317V370" stroke="#fff" stroke-width="1"/>
<path d="M313.5 317V370" stroke="#fff" stroke-width="1"/>
<path d="M294 369.5H314" stroke="#fff" stroke-width="1"/>
<path d="M294 317.5H314" stroke="#fff" stroke-width="1"/>
<circle cx="296.1" cy="320.5" r="1.6" stroke="#fff" stroke-width="1" fill="none"/>
<circle cx="311.9" cy="322.5" r="1.6" stroke="#fff" stroke-width="1" fill="none"/>
<path d="M297.7 319.5L310.3 321.5" stroke="#fff" stroke-width="1"/>
<path d="M297.7 321.5L310.3 323.5" stroke="#fff" stroke-width="1"/>
<circle cx="296.1" cy="324.5" r="1.6" stroke="#fff" stroke-width="1" fill="none"/>
<circle cx="311.9" cy="326.5" r="1.6" stroke="#fff" stroke-width="1" fill="none"/>
<path d="M297.7 323.5L310.3 325.5" stroke="#fff" stroke-width="1"/>
<path d="M297.7 325.5L310.3 327.5" stroke="#fff" stroke-width="1"/>
<circle cx="296.1" cy="328.5" r="1.6" stroke="#fff" stroke-width="1" fill="none"/>
<circle cx="311.9" cy="330.5" r="1.6" stroke="#fff" stroke-width="1" fill="none"/>
<path d="M297.7 327.5L310.3 329.5" stroke="#fff" stroke-width="1"/>
<path d="M297.7 329.5L310.3 331.5" stroke="#fff" stroke-width="1"/>
<circle cx="296.1" cy="356.5" r="1.6" stroke="#fff" stroke-width="1" fill="none"/>
<circle cx="311.9" cy="358.5" r="1.6" stroke="#fff" stroke-width="1" fill="none"/>
<path d="M297.7 355.5L310.3 357.5" stroke="#fff" stroke-width="1"/>
<path d="M297.7 357.5L310.3 359.5" stroke="#fff" stroke-width="1"/>
<circle cx="296.1" cy="360.5" r="1.6" stroke="#fff" stroke-width="1" fill="none"/>
<circle cx="311.9" cy="362.5" r="1.6" stroke="#fff" stroke-width="1" fill="none"/>
<path d="M297.7 359.5L310.3 361.5" stroke="#fff" stroke-width="1"/>
<path d="M297.7 361.5L310.3 363.5" stroke="#fff" stroke-width="1"/>
<circle cx="296.1" cy="364.5" r="1.6" stroke="#fff" stroke-width="1" fill="none"/>
<circle cx="311.9" cy="366.5" r="1.6" stroke="#fff" stroke-width="1" fill="none"/>
<path d="M297.7 363.5L310.3 365.5" stroke="#fff" stroke-width="1"/>
<path d="M297.7 365.5L310.3 367.5" stroke="#fff" stroke-width="1"/>
<path d="M296.5 316V373" stroke="#f00" stroke-width="1" stroke-dasharray="4 2"/>
<path d="M303.5 316V373" stroke="#f00" stroke-width="1" stroke-dasharray="4 2"/>
<path d="M311.5 316V373" stroke="#f00" stroke-width="1" stroke-dasharray="4 2"/>
<path d="M354.5 317V370" stroke="#fff" stroke-width="1"/>
<path d="M373.5 317V370" stroke="#fff" stroke-width="1"/>
<path d="M354 369.5H374" stroke="#fff" stroke-width="1"/>
<path d="M354 317.5H374" stroke="#fff" stroke-width="1"/>
<circle cx="356.1" cy="320.5" r="1.6" stroke="#fff" stroke-width="1" fill="none"/>
<circle cx="371.9" cy="322.5" r="1.6" stroke="#fff" stroke-width="1" fill="none"/>
<path d="M357.7 319.5L370.3 321.5" stroke="#fff" stroke-width="1"/>
<path d="M357.7 321.5L370.3 323.5" stroke="#fff" stroke-width="1"/>
<circle cx="356.1" cy="324.5" r="1.6" stroke="#fff" stroke-width="1" fill="none"/>
<circle cx="371.9" cy="326.5" r="1.6" stroke="#fff" stroke-width="1" fill="none"/>
<path d="M357.7 323.5L370.3 325.5" stroke="#fff" stroke-width="1"/>
<path d="M357.7 325.5L370.3 327.5" stroke="#fff" stroke-width="1"/>
<circle cx="356.1" cy="328.5" r="1.6" stroke="#fff" stroke-width="1" fill="none"/>
<circle cx="371.9" cy="330.5" r="1.6" stroke="#fff" stroke-width="1" fill="none"/>
<path d="M357.7 327.5L370.3 329.5" stroke="#fff" stroke-width="1"/>
<path d="M357.7 329.5L370.3 331.5" stroke="#fff" stroke-width="1"/>
<circle cx="356.1" cy="356.5" r="1.6" stroke="#fff" stroke-width="1" fill="none"/>
<circle cx="371.9" cy="358.5" r="1.6" stroke="#fff" stroke-width="1" fill="none"/>
<path d="M357.7 355.5L370.3 357.5" stroke="#fff" stroke-width="1"/>
<path d="M357.7 357.5L370.3 359.5" stroke="#fff" stroke-width="1"/>
<circle cx="356.1" cy="360.5" r="1.6" stroke="#fff" stroke-width="1" fill="none"/>
<circle cx="371.9" cy="362.5" r="1.6" stroke="#fff" stroke-width="1" fill="none"/>
<path d="M357.7 359.5L370.3 361.5" stroke="#fff" stroke-width="1"/>
<path d="M357.7 361.5L370.3 363.5" stroke="#fff" stroke-width="1"/>
<circle cx="356.1" cy="364.5" r="1.6" stroke="#fff" stroke-width="1" fill="none"/>
<circle cx="371.9" cy="366.5" r="1.6" stroke="#fff" stroke-width="1" fill="none"/>
<path d="M357.7 363.5L370.3 365.5" stroke="#fff" stroke-width="1"/>
<path d="M357.7 365.5L370.3 367.5" stroke="#fff" stroke-width="1"/>
<path d="M356.5 316V373" stroke="#f00" stroke-width="1" stroke-dasharray="4 2"/>
<path d="M363.5 316V373" stroke="#f00" stroke-width="1" stroke-dasharray="4 2"/>
<path d="M371.5 316V373" stroke="#f00" stroke-width="1" stroke-dasharray="4 2"/>
<path d="M251.5 204.5L272.5 207.5" stroke="#fff" stroke-width="1"/>
<path d="M251.5 207.5L272.5 210.5" stroke="#fff" stroke-width="1"/>
<path d="M251.5 210.5L272.5 213.5" stroke="#fff" stroke-width="1"/>
<path d="M251.5 213.5L272.5 216.5" stroke="#fff" stroke-width="1"/>
<path d="M251.5 216.5L272.5 219.5" stroke="#fff" stroke-width="1"/>
<path d="M251 205.5H256" stroke="#fff" stroke-width="1"/>
<path d="M268 207.5H274" stroke="#fff" stroke-width="1"/>
<path d="M251 208.5H256" stroke="#fff" stroke-width="1"/>
<path d="M268 210.5H274" stroke="#fff" stroke-width="1"/>
<path d="M251 211.5H256" stroke="#fff" stroke-width="1"/>
<path d="M268 213.5H274" stroke="#fff" stroke-width="1"/>
<path d="M251 214.5H256" stroke="#fff" stroke-width="1"/>
<path d="M268 216.5H274" stroke="#fff" stroke-width="1"/>
<circle cx="253.1" cy="221.5" r="1.6" stroke="#fff" stroke-width="1" fill="none"/>
<circle cx="270.9" cy="223.5" r="1.6" stroke="#fff" stroke-width="1" fill="none"/>
<path d="M254.7 220.5L269.3 222.5" stroke="#fff" stroke-width="1"/>
<path d="M254.7 222.5L269.3 224.5" stroke="#fff" stroke-width="1"/>
<circle cx="253.1" cy="227.5" r="1.6" stroke="#fff" stroke-width="1" fill="none"/>
<circle cx="270.9" cy="229.5" r="1.6" stroke="#fff" stroke-width="1" fill="none"/>
<path d="M254.7 226.5L269.3 228.5" stroke="#fff" stroke-width="1"/>
<path d="M254.7 228.5L269.3 230.5" stroke="#fff" stroke-width="1"/>
<circle cx="253.1" cy="237.5" r="1.6" stroke="#fff" stroke-width="1" fill="none"/>
<circle cx="270.9" cy="239.5" r="1.6" stroke="#fff" stroke-width="1" fill="none"/>
<path d="M254.7 236.5L269.3 238.5" stroke="#fff" stroke-width="1"/>
<path d="M254.7 238.5L269.3 240.5" stroke="#fff" stroke-width="1"/>
<path d="M253.5 206V247" stroke="#f00" stroke-width="1" stroke-dasharray="4 2"/>
<path d="M270.5 206V247" stroke="#f00" stroke-width="1" stroke-dasharray="4 2"/>
<rect x="327" y="150" width="14" height="86" fill="#000"/>
<path d="M326.5 236V67.5Q326.5 65.5 328.5 65.5H339.5Q341.5 65.5 341.5 67.5V236M328 66.5H340" stroke="#fff" stroke-width="1" fill="none"/>
<path d="M326.5 236.5L328.5 238.5L340.5 238.5L342.5 236.5" stroke="#fff" stroke-width="1" fill="none"/>
<path d="M333.5 59V403" stroke="#f00" stroke-width="1" stroke-dasharray="23 3 5 3" stroke-dashoffset="9"/>
<path d="M204.5 147V400" stroke="#f00" stroke-width="1" stroke-dasharray="23 3 5 3"/>
<path d="M463.5 152V400" stroke="#f00" stroke-width="1" stroke-dasharray="23 3 5 3"/>
<path d="M261.5 148V400" stroke="#f00" stroke-width="1" stroke-dasharray="23 3 5 3"/>
<path d="M406.5 147V227" stroke="#f00" stroke-width="1" stroke-dasharray="23 3 5 3"/>
<path d="M406.5 263V400" stroke="#f00" stroke-width="1" stroke-dasharray="23 3 5 3"/>
<path d="M364.5 170V200" stroke="#f00" stroke-width="1"/>
<path d="M180 192.5H229" stroke="#0f0" stroke-width="1"/>
<path d="M180.5 186V195" stroke="#0f0" stroke-width="1"/>
<path d="M228.5 186V195" stroke="#0f0" stroke-width="1"/>
<text x="202.5" y="192" fill="#0f0" font-size="7.6" font-family="'Liberation Sans','Noto Sans CJK SC',sans-serif" text-anchor="middle" font-weight="bold" textLength="12.3" lengthAdjust="spacingAndGlyphs">ø45</text>
<text x="208.95" y="188" fill="#0f0" font-size="5" font-family="'Liberation Sans','Noto Sans CJK SC',sans-serif" text-anchor="start" font-weight="bold" textLength="5.5" lengthAdjust="spacingAndGlyphs">H7</text>
<text x="208.95" y="192" fill="#0f0" font-size="5" font-family="'Liberation Sans','Noto Sans CJK SC',sans-serif" text-anchor="start" font-weight="bold" textLength="5.5" lengthAdjust="spacingAndGlyphs">r6</text>
<path d="M437 194.5H490" stroke="#0f0" stroke-width="1"/>
<path d="M437.5 188V197" stroke="#0f0" stroke-width="1"/>
<path d="M489.5 188V197" stroke="#0f0" stroke-width="1"/>
<text x="461.5" y="194" fill="#0f0" font-size="7.6" font-family="'Liberation Sans','Noto Sans CJK SC',sans-serif" text-anchor="middle" font-weight="bold" textLength="12.3" lengthAdjust="spacingAndGlyphs">ø48</text>
<text x="467.95" y="190" fill="#0f0" font-size="5" font-family="'Liberation Sans','Noto Sans CJK SC',sans-serif" text-anchor="start" font-weight="bold" textLength="5.5" lengthAdjust="spacingAndGlyphs">H7</text>
<text x="467.95" y="194" fill="#0f0" font-size="5" font-family="'Liberation Sans','Noto Sans CJK SC',sans-serif" text-anchor="start" font-weight="bold" textLength="5.5" lengthAdjust="spacingAndGlyphs">r6</text>
<path d="M187 356.5H223" stroke="#0f0" stroke-width="1"/>
<path d="M187.5 350V359" stroke="#0f0" stroke-width="1"/>
<path d="M222.5 350V359" stroke="#0f0" stroke-width="1"/>
<text x="203" y="356" fill="#0f0" font-size="7.6" font-family="'Liberation Sans','Noto Sans CJK SC',sans-serif" text-anchor="middle" font-weight="bold" textLength="12.3" lengthAdjust="spacingAndGlyphs">ø28</text>
<text x="209.45" y="352" fill="#0f0" font-size="5" font-family="'Liberation Sans','Noto Sans CJK SC',sans-serif" text-anchor="start" font-weight="bold" textLength="5.5" lengthAdjust="spacingAndGlyphs">H7</text>
<text x="209.45" y="356" fill="#0f0" font-size="5" font-family="'Liberation Sans','Noto Sans CJK SC',sans-serif" text-anchor="start" font-weight="bold" textLength="5.5" lengthAdjust="spacingAndGlyphs">r6</text>
<path d="M443 366.5H483" stroke="#0f0" stroke-width="1"/>
<path d="M443.5 360V369" stroke="#0f0" stroke-width="1"/>
<path d="M482.5 360V369" stroke="#0f0" stroke-width="1"/>
<text x="461" y="366" fill="#0f0" font-size="7.6" font-family="'Liberation Sans','Noto Sans CJK SC',sans-serif" text-anchor="middle" font-weight="bold" textLength="12.3" lengthAdjust="spacingAndGlyphs">ø32</text>
<text x="467.45" y="362" fill="#0f0" font-size="5" font-family="'Liberation Sans','Noto Sans CJK SC',sans-serif" text-anchor="start" font-weight="bold" textLength="5.5" lengthAdjust="spacingAndGlyphs">H7</text>
<text x="467.45" y="366" fill="#0f0" font-size="5" font-family="'Liberation Sans','Noto Sans CJK SC',sans-serif" text-anchor="start" font-weight="bold" textLength="5.5" lengthAdjust="spacingAndGlyphs">r6</text>
<path d="M308 181.5H360" stroke="#0f0" stroke-width="1"/>
<path d="M308.5 174V183" stroke="#0f0" stroke-width="1"/>
<path d="M359.5 171V184" stroke="#0f0" stroke-width="1"/>
<text x="331.5" y="181" fill="#0f0" font-size="7.6" font-family="'Liberation Sans','Noto Sans CJK SC',sans-serif" text-anchor="middle" font-weight="bold" textLength="12.3" lengthAdjust="spacingAndGlyphs">ø45</text>
<text x="337.95" y="177" fill="#0f0" font-size="5" font-family="'Liberation Sans','Noto Sans CJK SC',sans-serif" text-anchor="start" font-weight="bold" textLength="5.5" lengthAdjust="spacingAndGlyphs">H7</text>
<text x="337.95" y="181" fill="#0f0" font-size="5" font-family="'Liberation Sans','Noto Sans CJK SC',sans-serif" text-anchor="start" font-weight="bold" textLength="5.5" lengthAdjust="spacingAndGlyphs">r6</text>
<path d="M318 225.5H350" stroke="#0f0" stroke-width="1"/>
<path d="M318.5 216V228" stroke="#0f0" stroke-width="1"/>
<path d="M349.5 216V228" stroke="#0f0" stroke-width="1"/>
<text x="331.5" y="225" fill="#0f0" font-size="7.6" font-family="'Liberation Sans','Noto Sans CJK SC',sans-serif" text-anchor="middle" font-weight="bold" textLength="12.3" lengthAdjust="spacingAndGlyphs">ø25</text>
<text x="337.95" y="221" fill="#0f0" font-size="5" font-family="'Liberation Sans','Noto Sans CJK SC',sans-serif" text-anchor="start" font-weight="bold" textLength="5.5" lengthAdjust="spacingAndGlyphs">H7</text>
<text x="337.95" y="225" fill="#0f0" font-size="5" font-family="'Liberation Sans','Noto Sans CJK SC',sans-serif" text-anchor="start" font-weight="bold" textLength="5.5" lengthAdjust="spacingAndGlyphs">r6</text>
<path d="M325 321.5H343" stroke="#0f0" stroke-width="1"/>
<path d="M325.5 317V325" stroke="#0f0" stroke-width="1"/>
<path d="M342.5 317V325" stroke="#0f0" stroke-width="1"/>
<text x="331.5" y="321" fill="#0f0" font-size="7.6" font-family="'Liberation Sans','Noto Sans CJK SC',sans-serif" text-anchor="middle" font-weight="bold" textLength="12.3" lengthAdjust="spacingAndGlyphs">ø14</text>
<text x="337.95" y="317" fill="#0f0" font-size="5" font-family="'Liberation Sans','Noto Sans CJK SC',sans-serif" text-anchor="start" font-weight="bold" textLength="5.5" lengthAdjust="spacingAndGlyphs">H7</text>
<text x="337.95" y="321" fill="#0f0" font-size="5" font-family="'Liberation Sans','Noto Sans CJK SC',sans-serif" text-anchor="start" font-weight="bold" textLength="5.5" lengthAdjust="spacingAndGlyphs">r6</text>
<path d="M538 150.5H559" stroke="#0f0" stroke-width="1"/>
<path d="M508 192.5H552" stroke="#0f0" stroke-width="1"/>
<path d="M508 347.5H554" stroke="#0f0" stroke-width="1"/>
<path d="M535 395.5H560" stroke="#0f0" stroke-width="1"/>
<path d="M549.5 150V193" stroke="#0f0" stroke-width="1"/>
<path d="M557.5 150V396" stroke="#0f0" stroke-width="1"/>
<path d="M551.5 347V396" stroke="#0f0" stroke-width="1"/>
<text x="549" y="171" fill="#0f0" font-size="7.6" font-family="'Liberation Sans','Noto Sans CJK SC',sans-serif" text-anchor="middle" font-weight="bold" transform="rotate(-90 549 171)">35</text>
<text x="556.5" y="273" fill="#0f0" font-size="7.6" font-family="'Liberation Sans','Noto Sans CJK SC',sans-serif" text-anchor="middle" font-weight="bold" transform="rotate(-90 556.5 273)">204</text>
<text x="550.5" y="371" fill="#0f0" font-size="7.6" font-family="'Liberation Sans','Noto Sans CJK SC',sans-serif" text-anchor="middle" font-weight="bold" transform="rotate(-90 550.5 371)">40</text>
<path d="M107 166.5H128" stroke="#f0f" stroke-width="1"/>
<path d="M127.5 166.5L153.5 175.5" stroke="#f0f" stroke-width="1"/>
<text x="114.8" y="165.7" fill="#f0f" font-size="10.4" font-family="'Liberation Sans','Noto Sans CJK SC',sans-serif" text-anchor="middle" textLength="9.6" lengthAdjust="spacingAndGlyphs">14</text>
<path d="M107 184.5H128" stroke="#f0f" stroke-width="1"/>
<path d="M127.5 184.5L242.5 198.5" stroke="#f0f" stroke-width="1"/>
<text x="114.8" y="183.7" fill="#f0f" font-size="10.4" font-family="'Liberation Sans','Noto Sans CJK SC',sans-serif" text-anchor="middle" textLength="9.6" lengthAdjust="spacingAndGlyphs">13</text>
<path d="M107 202.5H128" stroke="#f0f" stroke-width="1"/>
<path d="M127.5 202.5L242.5 217.5" stroke="#f0f" stroke-width="1"/>
<text x="114.8" y="201.7" fill="#f0f" font-size="10.4" font-family="'Liberation Sans','Noto Sans CJK SC',sans-serif" text-anchor="middle" textLength="9.6" lengthAdjust="spacingAndGlyphs">12</text>
<path d="M107 220.5H128" stroke="#f0f" stroke-width="1"/>
<path d="M127.5 220.5L246.5 243.5" stroke="#f0f" stroke-width="1"/>
<text x="114.8" y="219.7" fill="#f0f" font-size="10.4" font-family="'Liberation Sans','Noto Sans CJK SC',sans-serif" text-anchor="middle" textLength="9.6" lengthAdjust="spacingAndGlyphs">11</text>
<path d="M107 238.5H128" stroke="#f0f" stroke-width="1"/>
<path d="M127.5 238.5L322.5 257.5" stroke="#f0f" stroke-width="1"/>
<text x="114.8" y="237.7" fill="#f0f" font-size="10.4" font-family="'Liberation Sans','Noto Sans CJK SC',sans-serif" text-anchor="middle" textLength="9.6" lengthAdjust="spacingAndGlyphs">10</text>
<path d="M107 256.5H128" stroke="#f0f" stroke-width="1"/>
<path d="M127.5 256.5L330.5 273.5" stroke="#f0f" stroke-width="1"/>
<text x="115.8" y="255.7" fill="#f0f" font-size="10.4" font-family="'Liberation Sans','Noto Sans CJK SC',sans-serif" text-anchor="middle" textLength="4.8" lengthAdjust="spacingAndGlyphs">9</text>
<path d="M107 274.5H128" stroke="#f0f" stroke-width="1"/>
<path d="M127.5 274.5L243.5 296.5" stroke="#f0f" stroke-width="1"/>
<text x="115.8" y="273.7" fill="#f0f" font-size="10.4" font-family="'Liberation Sans','Noto Sans CJK SC',sans-serif" text-anchor="middle" textLength="4.8" lengthAdjust="spacingAndGlyphs">8</text>
<path d="M107 293.5H128" stroke="#f0f" stroke-width="1"/>
<path d="M127.5 293.5L296.5 313.5" stroke="#f0f" stroke-width="1"/>
<text x="115.8" y="292.7" fill="#f0f" font-size="10.4" font-family="'Liberation Sans','Noto Sans CJK SC',sans-serif" text-anchor="middle" textLength="4.8" lengthAdjust="spacingAndGlyphs">7</text>
<path d="M107 311.5H128" stroke="#f0f" stroke-width="1"/>
<path d="M127.5 311.5L329.5 327.5" stroke="#f0f" stroke-width="1"/>
<text x="115.8" y="310.7" fill="#f0f" font-size="10.4" font-family="'Liberation Sans','Noto Sans CJK SC',sans-serif" text-anchor="middle" textLength="4.8" lengthAdjust="spacingAndGlyphs">6</text>
<path d="M107 329.5H128" stroke="#f0f" stroke-width="1"/>
<path d="M127.5 329.5L250.5 333.5" stroke="#f0f" stroke-width="1"/>
<text x="115.8" y="328.7" fill="#f0f" font-size="10.4" font-family="'Liberation Sans','Noto Sans CJK SC',sans-serif" text-anchor="middle" textLength="4.8" lengthAdjust="spacingAndGlyphs">5</text>
<path d="M107 347.5H128" stroke="#f0f" stroke-width="1"/>
<path d="M127.5 347.5L239.5 344.5" stroke="#f0f" stroke-width="1"/>
<text x="115.8" y="346.7" fill="#f0f" font-size="10.4" font-family="'Liberation Sans','Noto Sans CJK SC',sans-serif" text-anchor="middle" textLength="4.8" lengthAdjust="spacingAndGlyphs">4</text>
<path d="M107 365.5H128" stroke="#f0f" stroke-width="1"/>
<path d="M127.5 365.5L299.5 364.5" stroke="#f0f" stroke-width="1"/>
<text x="115.8" y="364.7" fill="#f0f" font-size="10.4" font-family="'Liberation Sans','Noto Sans CJK SC',sans-serif" text-anchor="middle" textLength="4.8" lengthAdjust="spacingAndGlyphs">3</text>
<path d="M107 383.5H128" stroke="#f0f" stroke-width="1"/>
<path d="M127.5 383.5L258.5 381.5" stroke="#f0f" stroke-width="1"/>
<text x="115.8" y="382.7" fill="#f0f" font-size="10.4" font-family="'Liberation Sans','Noto Sans CJK SC',sans-serif" text-anchor="middle" textLength="4.8" lengthAdjust="spacingAndGlyphs">2</text>
<path d="M107 401.5H128" stroke="#f0f" stroke-width="1"/>
<path d="M127.5 401.5L178.5 391.5" stroke="#f0f" stroke-width="1"/>
<text x="115.8" y="400.7" fill="#f0f" font-size="10.4" font-family="'Liberation Sans','Noto Sans CJK SC',sans-serif" text-anchor="middle" textLength="4.8" lengthAdjust="spacingAndGlyphs">1</text>
<path d="M202 143.5H222" stroke="#f0f" stroke-width="1"/>
<path d="M221.5 143.5L254.5 206.5" stroke="#f0f" stroke-width="1"/>
<text x="211" y="143" fill="#f0f" font-size="10.4" font-family="'Liberation Sans','Noto Sans CJK SC',sans-serif" text-anchor="middle" textLength="10.5" lengthAdjust="spacingAndGlyphs">15</text>
<path d="M226 143.5H245" stroke="#f0f" stroke-width="1"/>
<path d="M244.5 143.5L261.5 182.5" stroke="#f0f" stroke-width="1"/>
<text x="234.5" y="143" fill="#f0f" font-size="10.4" font-family="'Liberation Sans','Noto Sans CJK SC',sans-serif" text-anchor="middle" textLength="10.5" lengthAdjust="spacingAndGlyphs">16</text>
<path d="M262 143.5H281" stroke="#f0f" stroke-width="1"/>
<path d="M280.5 143.5L317.5 180.5" stroke="#f0f" stroke-width="1"/>
<text x="270.5" y="143" fill="#f0f" font-size="10.4" font-family="'Liberation Sans','Noto Sans CJK SC',sans-serif" text-anchor="middle" textLength="10.5" lengthAdjust="spacingAndGlyphs">17</text>
<path d="M286 143.5H306" stroke="#f0f" stroke-width="1"/>
<path d="M305.5 143.5L330.5 170.5" stroke="#f0f" stroke-width="1"/>
<text x="295" y="143" fill="#f0f" font-size="10.4" font-family="'Liberation Sans','Noto Sans CJK SC',sans-serif" text-anchor="middle" textLength="10.5" lengthAdjust="spacingAndGlyphs">18</text>
<path d="M365 143.5H385" stroke="#f0f" stroke-width="1"/>
<path d="M365.5 143.5L361.5 185.5" stroke="#f0f" stroke-width="1"/>
<text x="374" y="143" fill="#f0f" font-size="10.4" font-family="'Liberation Sans','Noto Sans CJK SC',sans-serif" text-anchor="middle" textLength="10.5" lengthAdjust="spacingAndGlyphs">19</text>
<path d="M414 143.5H433" stroke="#f0f" stroke-width="1"/>
<path d="M414.5 143.5L406.5 175.5" stroke="#f0f" stroke-width="1"/>
<text x="422.5" y="143" fill="#f0f" font-size="10.4" font-family="'Liberation Sans','Noto Sans CJK SC',sans-serif" text-anchor="middle" textLength="10.5" lengthAdjust="spacingAndGlyphs">20</text>
<path d="M514 250.5H533" stroke="#f0f" stroke-width="1"/>
<path d="M514.5 250.5L486.5 234.5" stroke="#f0f" stroke-width="1"/>
<text x="522.5" y="250" fill="#f0f" font-size="10.4" font-family="'Liberation Sans','Noto Sans CJK SC',sans-serif" text-anchor="middle" textLength="10" lengthAdjust="spacingAndGlyphs">21</text>
<path d="M514 268.5H533" stroke="#f0f" stroke-width="1"/>
<path d="M514.5 268.5L471.5 264.5" stroke="#f0f" stroke-width="1"/>
<text x="522.5" y="268" fill="#f0f" font-size="10.4" font-family="'Liberation Sans','Noto Sans CJK SC',sans-serif" text-anchor="middle" textLength="10" lengthAdjust="spacingAndGlyphs">22</text>
<path d="M514 286.5H533" stroke="#f0f" stroke-width="1"/>
<path d="M514.5 286.5L408.5 323.5" stroke="#f0f" stroke-width="1"/>
<text x="522.5" y="286" fill="#f0f" font-size="10.4" font-family="'Liberation Sans','Noto Sans CJK SC',sans-serif" text-anchor="middle" textLength="10" lengthAdjust="spacingAndGlyphs">23</text>
<path d="M272.09 438.37L175.94 486.67A84 84 0 0 0 175.94 636.93L272.09 685.23A138 138 0 0 0 395.51 685.23L491.06 636.93A84 84 0 0 0 491.06 486.67L395.51 438.37A138 138 0 0 0 272.09 438.37Z" stroke="#fff" stroke-width="1" fill="none"/>
<path d="M285.73 465.65L189.35 513.5A54 54 0 0 0 189.35 610.1L285.73 657.95A107.5 107.5 0 0 0 381.87 657.95L477.65 610.1A54 54 0 0 0 477.65 513.5L381.87 465.65A107.5 107.5 0 0 0 285.73 465.65Z" stroke="#fff" stroke-width="1" fill="none"/>
<circle cx="333.8" cy="561.8" r="96" stroke="#fff" stroke-width="1" fill="none"/>
<circle cx="333.8" cy="561.8" r="17.9" stroke="#fff" stroke-width="1" fill="none"/>
<circle cx="333.8" cy="561.8" r="8.6" stroke="#fff" stroke-width="1" fill="none"/>
<circle cx="204.8" cy="561.8" r="16.6" stroke="#fff" stroke-width="1" fill="none"/>
<circle cx="463.8" cy="561.8" r="19.4" stroke="#fff" stroke-width="1" fill="none"/>
<path d="M135.04 531.5H149.5Q153.5 531.5 153.5 535.5V587.5Q153.5 591.5 149.5 591.5H135.04" stroke="#fff" stroke-width="1" fill="none"/>
<path d="M531.96 531.5H518.5Q514.5 531.5 514.5 535.5V587.5Q514.5 591.5 518.5 591.5H531.96" stroke="#fff" stroke-width="1" fill="none"/>
<circle cx="333.8" cy="561.8" r="72" stroke="#f00" stroke-width="1" fill="none" stroke-dasharray="16 3 3 3"/>
<circle cx="333.8" cy="561.8" r="41.5" stroke="#ff0" stroke-width="1" fill="none" stroke-dasharray="4 3"/>
<path d="M125 561.5H543" stroke="#f00" stroke-width="1" stroke-dasharray="16 3 4 3"/>
<path d="M333.5 417V706" stroke="#f00" stroke-width="1" stroke-dasharray="16 3 4 3"/>
<path d="M204.5 537V584" stroke="#f00" stroke-width="1"/>
<path d="M463.5 537V584" stroke="#f00" stroke-width="1"/>
<path d="M333.5 561.5L376.5 487.5" stroke="#f00" stroke-width="1" stroke-dasharray="22 3"/>
<path d="M333.5 561.5L376.5 636.5" stroke="#f00" stroke-width="1" stroke-dasharray="22 3"/>
<circle cx="333.8" cy="489.8" r="5.4" stroke="#fff" stroke-width="1" fill="none"/>
<circle cx="369.8" cy="499.45" r="6.3" stroke="#f0f" stroke-width="1" fill="none"/>
<circle cx="369.8" cy="499.45" r="5.4" stroke="#fff" stroke-width="1" fill="none"/>
<circle cx="405.8" cy="561.8" r="5.4" stroke="#fff" stroke-width="1" fill="none"/>
<circle cx="369.8" cy="624.15" r="6.3" stroke="#f0f" stroke-width="1" fill="none"/>
<circle cx="369.8" cy="624.15" r="5.4" stroke="#fff" stroke-width="1" fill="none"/>
<circle cx="261.8" cy="561.8" r="6.3" stroke="#f0f" stroke-width="1" fill="none"/>
<circle cx="261.8" cy="561.8" r="5.4" stroke="#fff" stroke-width="1" fill="none"/>
<path d="M190.5 579.5L220.5 544.5" stroke="#0f0" stroke-width="1"/>
<path d="M220 544.5H233" stroke="#0f0" stroke-width="1"/>
<text x="226" y="543" fill="#0f0" font-size="7" font-family="'Liberation Sans','Noto Sans CJK SC',sans-serif" text-anchor="middle" font-weight="bold">ø28</text>
<path d="M239.5 601.5L430.5 521.5" stroke="#0f0" stroke-width="1"/>
<path d="M430 521.5H446" stroke="#0f0" stroke-width="1"/>
<text x="438" y="520" fill="#0f0" font-size="7" font-family="'Liberation Sans','Noto Sans CJK SC',sans-serif" text-anchor="middle" font-weight="bold">ø160</text>
<path d="M453.5 585.5L473.5 538.5" stroke="#0f0" stroke-width="1"/>
<path d="M473 538.5H487" stroke="#0f0" stroke-width="1"/>
<text x="480" y="537" fill="#0f0" font-size="7" font-family="'Liberation Sans','Noto Sans CJK SC',sans-serif" text-anchor="middle" font-weight="bold">ø32</text>
<path d="M204.5 583V680" stroke="#0f0" stroke-width="1"/>
<path d="M463.5 583V680" stroke="#0f0" stroke-width="1"/>
<path d="M204 677.5H464" stroke="#0f0" stroke-width="1"/>
<text x="334" y="676" fill="#0f0" font-size="7" font-family="'Liberation Sans','Noto Sans CJK SC',sans-serif" text-anchor="middle" font-weight="bold">215</text>
<path d="M646.5 210.5H724.5V212.5H706Q703.5 212.5 703.5 215.5V234.5H667.5V215.5Q667.5 212.5 665 212.5H646.5Z" stroke="#fff" stroke-width="1" fill="none"/>
<path d="M669.5 234V216.5Q669.5 213 672 211.5M701.5 234V216.5Q701.5 213 699 211.5" stroke="#fff" stroke-width="1" fill="none"/>
<path d="M648 211.5H664M706 211.5H723M668.5 217V232M702.5 217V232" stroke="#0ff" stroke-width="1" stroke-dasharray="2 4"/>
<path d="M685.5 206V241" stroke="#f00" stroke-width="1"/>
<path d="M646 204.5H725" stroke="#0f0" stroke-width="1"/>
<path d="M646.5 202V211" stroke="#0f0" stroke-width="1"/>
<path d="M724.5 202V211" stroke="#0f0" stroke-width="1"/>
<text x="685.5" y="203" fill="#0f0" font-size="5.6" font-family="'Liberation Sans','Noto Sans CJK SC',sans-serif" text-anchor="middle" font-weight="bold">ø65</text>
<path d="M667 242.5H704" stroke="#0f0" stroke-width="1"/>
<path d="M667.5 235V245" stroke="#0f0" stroke-width="1"/>
<path d="M703.5 235V245" stroke="#0f0" stroke-width="1"/>
<text x="685.5" y="241.5" fill="#0f0" font-size="5.6" font-family="'Liberation Sans','Noto Sans CJK SC',sans-serif" text-anchor="middle" font-weight="bold">ø30</text>
<path d="M729.5 210V235" stroke="#0f0" stroke-width="1"/>
<path d="M725 210.5H732" stroke="#0f0" stroke-width="1"/>
<path d="M704 234.5H732" stroke="#0f0" stroke-width="1"/>
<text x="728" y="222.5" fill="#0f0" font-size="5.6" font-family="'Liberation Sans','Noto Sans CJK SC',sans-serif" text-anchor="middle" font-weight="bold" transform="rotate(-90 728 222.5)">20</text>
<path d="M644.5 202V219" stroke="#0f0" stroke-width="1"/>
<text x="643.5" y="213" fill="#0f0" font-size="5.6" font-family="'Liberation Sans','Noto Sans CJK SC',sans-serif" text-anchor="middle" font-weight="bold" transform="rotate(-90 643.5 213)">2</text>
<path d="M704.5 214.5L711.5 220.5" stroke="#0f0" stroke-width="1"/>
<path d="M711 220.5H719" stroke="#0f0" stroke-width="1"/>
<text x="715" y="219.5" fill="#0f0" font-size="5.6" font-family="'Liberation Sans','Noto Sans CJK SC',sans-serif" text-anchor="middle" font-weight="bold">R4</text>
<text x="693" y="268.5" fill="#f0f" font-size="9.6" font-family="'Liberation Sans','Noto Sans CJK SC',sans-serif" text-anchor="middle" textLength="29" lengthAdjust="spacingAndGlyphs">工序图</text>
<text x="612.5" y="561" fill="#f0f" font-size="7.4" font-family="'Liberation Sans','Noto Sans CJK SC',sans-serif" text-anchor="start" font-weight="500" textLength="29" lengthAdjust="spacingAndGlyphs">技术要求</text>
<text x="612.5" y="570" fill="#f0f" font-size="7.4" font-family="'Liberation Sans','Noto Sans CJK SC',sans-serif" text-anchor="start" font-weight="500" textLength="127" lengthAdjust="spacingAndGlyphs">1. 安装模具前检查模具零件是否符合图纸</text>
<text x="612.5" y="579" fill="#f0f" font-size="7.4" font-family="'Liberation Sans','Noto Sans CJK SC',sans-serif" text-anchor="start" font-weight="500" textLength="92" lengthAdjust="spacingAndGlyphs">2. 选用10#中间导柱式模架</text>
<text x="612.5" y="588" fill="#f0f" font-size="7.4" font-family="'Liberation Sans','Noto Sans CJK SC',sans-serif" text-anchor="start" font-weight="500" textLength="67.5" lengthAdjust="spacingAndGlyphs">3. 保证模具间隙均匀</text>
<text x="612.5" y="597" fill="#f0f" font-size="7.4" font-family="'Liberation Sans','Noto Sans CJK SC',sans-serif" text-anchor="start" font-weight="500" textLength="79" lengthAdjust="spacingAndGlyphs">4. 选用63T冲床调试模具</text>
<text x="792.5" y="450.2" fill="#f0f" font-size="6" font-family="'Liberation Sans','Noto Sans CJK SC',sans-serif" text-anchor="middle" font-weight="bold">23</text>
<text x="798.5" y="450.2" fill="#f0f" font-size="6" font-family="'Liberation Sans','Noto Sans CJK SC',sans-serif" text-anchor="start" font-weight="bold" textLength="42.98" lengthAdjust="spacingAndGlyphs">GB/T119.1-2000</text>
<rect x="862" y="446" width="14" height="5" fill="#f0f"/>
<text x="903" y="450.2" fill="#f0f" font-size="6" font-family="'Liberation Sans','Noto Sans CJK SC',sans-serif" text-anchor="middle" font-weight="bold">2</text>
<text x="931" y="450.2" fill="#f0f" font-size="6" font-family="'Liberation Sans','Noto Sans CJK SC',sans-serif" text-anchor="middle" font-weight="bold" textLength="10" lengthAdjust="spacingAndGlyphs">35<tspan font-size="5.4">钢</tspan></text>
<path d="M787 452.5H1004" stroke="#f0f" stroke-width="1"/>
<text x="792.5" y="458.2" fill="#f0f" font-size="6" font-family="'Liberation Sans','Noto Sans CJK SC',sans-serif" text-anchor="middle" font-weight="bold">22</text>
<text x="798.5" y="458.2" fill="#f0f" font-size="6" font-family="'Liberation Sans','Noto Sans CJK SC',sans-serif" text-anchor="start" font-weight="bold" textLength="46" lengthAdjust="spacingAndGlyphs">GB/T2861.1-1990</text>
<rect x="861" y="454" width="15" height="5" fill="#f0f"/>
<text x="903" y="458.2" fill="#f0f" font-size="6" font-family="'Liberation Sans','Noto Sans CJK SC',sans-serif" text-anchor="middle" font-weight="bold">2</text>
<text x="931" y="458.2" fill="#f0f" font-size="6" font-family="'Liberation Sans','Noto Sans CJK SC',sans-serif" text-anchor="middle" font-weight="bold" textLength="10" lengthAdjust="spacingAndGlyphs">20<tspan font-size="5.4">钢</tspan></text>
<path d="M787 460.5H1004" stroke="#f0f" stroke-width="1"/>
<text x="792.5" y="467.2" fill="#f0f" font-size="6" font-family="'Liberation Sans','Noto Sans CJK SC',sans-serif" text-anchor="middle" font-weight="bold">21</text>
<text x="798.5" y="467.2" fill="#f0f" font-size="6" font-family="'Liberation Sans','Noto Sans CJK SC',sans-serif" text-anchor="start" font-weight="bold" textLength="46" lengthAdjust="spacingAndGlyphs">GB/T2861.1-1990</text>
<rect x="861" y="463" width="15" height="5" fill="#f0f"/>
<text x="903" y="467.2" fill="#f0f" font-size="6" font-family="'Liberation Sans','Noto Sans CJK SC',sans-serif" text-anchor="middle" font-weight="bold">2</text>
<text x="931" y="467.2" fill="#f0f" font-size="6" font-family="'Liberation Sans','Noto Sans CJK SC',sans-serif" text-anchor="middle" font-weight="bold" textLength="10" lengthAdjust="spacingAndGlyphs">20<tspan font-size="5.4">钢</tspan></text>
<path d="M787 469.5H1004" stroke="#f0f" stroke-width="1"/>
<text x="792.5" y="475.2" fill="#f0f" font-size="6" font-family="'Liberation Sans','Noto Sans CJK SC',sans-serif" text-anchor="middle" font-weight="bold">20</text>
<text x="798.5" y="475.2" fill="#f0f" font-size="6" font-family="'Liberation Sans','Noto Sans CJK SC',sans-serif" text-anchor="start" font-weight="bold" textLength="44" lengthAdjust="spacingAndGlyphs">GB/T5782-1997</text>
<rect x="857" y="471" width="24" height="5" fill="#f0f"/>
<text x="903" y="475.2" fill="#f0f" font-size="6" font-family="'Liberation Sans','Noto Sans CJK SC',sans-serif" text-anchor="middle" font-weight="bold">3</text>
<text x="931" y="475.2" fill="#f0f" font-size="6" font-family="'Liberation Sans','Noto Sans CJK SC',sans-serif" text-anchor="middle" font-weight="bold" textLength="10" lengthAdjust="spacingAndGlyphs">35<tspan font-size="5.4">钢</tspan></text>
<path d="M787 477.5H1004" stroke="#f0f" stroke-width="1"/>
<text x="792.5" y="483.2" fill="#f0f" font-size="6" font-family="'Liberation Sans','Noto Sans CJK SC',sans-serif" text-anchor="middle" font-weight="bold">19</text>
<text x="798.5" y="483.2" fill="#f0f" font-size="6" font-family="'Liberation Sans','Noto Sans CJK SC',sans-serif" text-anchor="start" font-weight="bold" textLength="42.98" lengthAdjust="spacingAndGlyphs">GB/T119.1-2000</text>
<rect x="862" y="479" width="14" height="5" fill="#f0f"/>
<text x="903" y="483.2" fill="#f0f" font-size="6" font-family="'Liberation Sans','Noto Sans CJK SC',sans-serif" text-anchor="middle" font-weight="bold">1</text>
<text x="931" y="483.2" fill="#f0f" font-size="6" font-family="'Liberation Sans','Noto Sans CJK SC',sans-serif" text-anchor="middle" font-weight="bold" textLength="10" lengthAdjust="spacingAndGlyphs">35<tspan font-size="5.4">钢</tspan></text>
<path d="M787 485.5H1004" stroke="#f0f" stroke-width="1"/>
<text x="792.5" y="492.2" fill="#f0f" font-size="6" font-family="'Liberation Sans','Noto Sans CJK SC',sans-serif" text-anchor="middle" font-weight="bold">18</text>
<text x="798.5" y="492.2" fill="#f0f" font-size="6" font-family="'Liberation Sans','Noto Sans CJK SC',sans-serif" text-anchor="start" font-weight="bold" textLength="42.98" lengthAdjust="spacingAndGlyphs">GB/T119.1-2000</text>
<rect x="862" y="488" width="15" height="5" fill="#f0f"/>
<text x="903" y="492.2" fill="#f0f" font-size="6" font-family="'Liberation Sans','Noto Sans CJK SC',sans-serif" text-anchor="middle" font-weight="bold">1</text>
<text x="931" y="492.2" fill="#f0f" font-size="6" font-family="'Liberation Sans','Noto Sans CJK SC',sans-serif" text-anchor="middle" font-weight="bold" textLength="10" lengthAdjust="spacingAndGlyphs">35<tspan font-size="5.4">钢</tspan></text>
<path d="M787 494.5H1004" stroke="#f0f" stroke-width="1"/>
<text x="792.5" y="500.2" fill="#f0f" font-size="6" font-family="'Liberation Sans','Noto Sans CJK SC',sans-serif" text-anchor="middle" font-weight="bold">17</text>
<text x="800.5" y="500.2" fill="#f0f" font-size="6" font-family="'Liberation Sans','Noto Sans CJK SC',sans-serif" text-anchor="start" font-weight="bold" textLength="15" lengthAdjust="spacingAndGlyphs">MJ-11</text>
<rect x="861" y="496" width="6" height="5" fill="#f0f"/>
<rect x="872" y="496" width="6" height="5" fill="#f0f"/>
<text x="903" y="500.2" fill="#f0f" font-size="6" font-family="'Liberation Sans','Noto Sans CJK SC',sans-serif" text-anchor="middle" font-weight="bold">1</text>
<text x="931" y="500.2" fill="#f0f" font-size="6" font-family="'Liberation Sans','Noto Sans CJK SC',sans-serif" text-anchor="middle" font-weight="bold" textLength="10" lengthAdjust="spacingAndGlyphs">45<tspan font-size="5.4">钢</tspan></text>
<path d="M787 502.5H1004" stroke="#f0f" stroke-width="1"/>
<text x="792.5" y="509.2" fill="#f0f" font-size="6" font-family="'Liberation Sans','Noto Sans CJK SC',sans-serif" text-anchor="middle" font-weight="bold">16</text>
<text x="798.5" y="509.2" fill="#f0f" font-size="6" font-family="'Liberation Sans','Noto Sans CJK SC',sans-serif" text-anchor="start" font-weight="bold" textLength="33.77" lengthAdjust="spacingAndGlyphs">GB2867.6-81</text>
<rect x="860" y="505" width="19" height="5" fill="#f0f"/>
<text x="903" y="509.2" fill="#f0f" font-size="6" font-family="'Liberation Sans','Noto Sans CJK SC',sans-serif" text-anchor="middle" font-weight="bold">3</text>
<text x="931" y="509.2" fill="#f0f" font-size="6" font-family="'Liberation Sans','Noto Sans CJK SC',sans-serif" text-anchor="middle" font-weight="bold" textLength="10" lengthAdjust="spacingAndGlyphs">35<tspan font-size="5.4">钢</tspan></text>
<path d="M787 511.5H1004" stroke="#f0f" stroke-width="1"/>
<text x="792.5" y="517.2" fill="#f0f" font-size="6" font-family="'Liberation Sans','Noto Sans CJK SC',sans-serif" text-anchor="middle" font-weight="bold">15</text>
<text x="798.5" y="517.2" fill="#f0f" font-size="6" font-family="'Liberation Sans','Noto Sans CJK SC',sans-serif" text-anchor="start" font-weight="bold" textLength="46" lengthAdjust="spacingAndGlyphs">GB/T2089-1980</text>
<rect x="862" y="513" width="6" height="5" fill="#f0f"/>
<rect x="873" y="513" width="5" height="5" fill="#f0f"/>
<text x="903" y="517.2" fill="#f0f" font-size="6" font-family="'Liberation Sans','Noto Sans CJK SC',sans-serif" text-anchor="middle" font-weight="bold">3</text>
<text x="931" y="517.2" fill="#f0f" font-size="6" font-family="'Liberation Sans','Noto Sans CJK SC',sans-serif" text-anchor="middle" font-weight="bold" textLength="13" lengthAdjust="spacingAndGlyphs">65Mn</text>
<path d="M787 519.5H1004" stroke="#f0f" stroke-width="1"/>
<text x="792.5" y="525.2" fill="#f0f" font-size="6" font-family="'Liberation Sans','Noto Sans CJK SC',sans-serif" text-anchor="middle" font-weight="bold">14</text>
<text x="798.5" y="525.2" fill="#f0f" font-size="6" font-family="'Liberation Sans','Noto Sans CJK SC',sans-serif" text-anchor="start" font-weight="bold" textLength="7" lengthAdjust="spacingAndGlyphs">10#</text>
<rect x="805" y="522" width="36" height="4" fill="#f0f"/>
<rect x="861" y="521" width="15" height="5" fill="#f0f"/>
<text x="903" y="525.2" fill="#f0f" font-size="6" font-family="'Liberation Sans','Noto Sans CJK SC',sans-serif" text-anchor="middle" font-weight="bold">1</text>
<text x="931" y="525.2" fill="#f0f" font-size="6" font-family="'Liberation Sans','Noto Sans CJK SC',sans-serif" text-anchor="middle" font-weight="bold" textLength="16" lengthAdjust="spacingAndGlyphs">HT200</text>
<path d="M787 527.5H1004" stroke="#f0f" stroke-width="1"/>
<text x="792.5" y="534.2" fill="#f0f" font-size="6" font-family="'Liberation Sans','Noto Sans CJK SC',sans-serif" text-anchor="middle" font-weight="bold">13</text>
<text x="800.5" y="534.2" fill="#f0f" font-size="6" font-family="'Liberation Sans','Noto Sans CJK SC',sans-serif" text-anchor="start" font-weight="bold" textLength="15" lengthAdjust="spacingAndGlyphs">MJ-10</text>
<rect x="861" y="530" width="14" height="5" fill="#f0f"/>
<text x="903" y="534.2" fill="#f0f" font-size="6" font-family="'Liberation Sans','Noto Sans CJK SC',sans-serif" text-anchor="middle" font-weight="bold">1</text>
<text x="931" y="534.2" fill="#f0f" font-size="6" font-family="'Liberation Sans','Noto Sans CJK SC',sans-serif" text-anchor="middle" font-weight="bold" textLength="10" lengthAdjust="spacingAndGlyphs">45<tspan font-size="5.4">钢</tspan></text>
<path d="M787 536.5H1004" stroke="#f0f" stroke-width="1"/>
<text x="792.5" y="542.2" fill="#f0f" font-size="6" font-family="'Liberation Sans','Noto Sans CJK SC',sans-serif" text-anchor="middle" font-weight="bold">12</text>
<text x="800.5" y="542.2" fill="#f0f" font-size="6" font-family="'Liberation Sans','Noto Sans CJK SC',sans-serif" text-anchor="start" font-weight="bold" textLength="15" lengthAdjust="spacingAndGlyphs">MJ-09</text>
<rect x="855" y="538" width="28" height="5" fill="#f0f"/>
<text x="903" y="542.2" fill="#f0f" font-size="6" font-family="'Liberation Sans','Noto Sans CJK SC',sans-serif" text-anchor="middle" font-weight="bold">1</text>
<text x="931" y="542.2" fill="#f0f" font-size="6" font-family="'Liberation Sans','Noto Sans CJK SC',sans-serif" text-anchor="middle" font-weight="bold" textLength="10" lengthAdjust="spacingAndGlyphs">45<tspan font-size="5.4">钢</tspan></text>
<path d="M787 544.5H1004" stroke="#f0f" stroke-width="1"/>
<text x="792.5" y="551.2" fill="#f0f" font-size="6" font-family="'Liberation Sans','Noto Sans CJK SC',sans-serif" text-anchor="middle" font-weight="bold">11</text>
<text x="800.5" y="551.2" fill="#f0f" font-size="6" font-family="'Liberation Sans','Noto Sans CJK SC',sans-serif" text-anchor="start" font-weight="bold" textLength="15" lengthAdjust="spacingAndGlyphs">MJ-08</text>
<rect x="861" y="547" width="15" height="5" fill="#f0f"/>
<text x="903" y="551.2" fill="#f0f" font-size="6" font-family="'Liberation Sans','Noto Sans CJK SC',sans-serif" text-anchor="middle" font-weight="bold">1</text>
<text x="931" y="551.2" fill="#f0f" font-size="6" font-family="'Liberation Sans','Noto Sans CJK SC',sans-serif" text-anchor="middle" font-weight="bold" textLength="10" lengthAdjust="spacingAndGlyphs">45<tspan font-size="5.4">钢</tspan></text>
<path d="M787 553.5H1004" stroke="#f0f" stroke-width="1"/>
<text x="792.5" y="559.2" fill="#f0f" font-size="6" font-family="'Liberation Sans','Noto Sans CJK SC',sans-serif" text-anchor="middle" font-weight="bold">10</text>
<text x="800.5" y="559.2" fill="#f0f" font-size="6" font-family="'Liberation Sans','Noto Sans CJK SC',sans-serif" text-anchor="start" font-weight="bold" textLength="15" lengthAdjust="spacingAndGlyphs">MJ-07</text>
<rect x="861" y="555" width="15" height="5" fill="#f0f"/>
<text x="903" y="559.2" fill="#f0f" font-size="6" font-family="'Liberation Sans','Noto Sans CJK SC',sans-serif" text-anchor="middle" font-weight="bold">1</text>
<text x="931" y="559.2" fill="#f0f" font-size="6" font-family="'Liberation Sans','Noto Sans CJK SC',sans-serif" text-anchor="middle" font-weight="bold" textLength="22" lengthAdjust="spacingAndGlyphs">Cr12MoV</text>
<path d="M787 561.5H1004" stroke="#f0f" stroke-width="1"/>
<text x="792.5" y="568.2" fill="#f0f" font-size="6" font-family="'Liberation Sans','Noto Sans CJK SC',sans-serif" text-anchor="middle" font-weight="bold">9</text>
<text x="800.5" y="568.2" fill="#f0f" font-size="6" font-family="'Liberation Sans','Noto Sans CJK SC',sans-serif" text-anchor="start" font-weight="bold" textLength="15" lengthAdjust="spacingAndGlyphs">MJ-06</text>
<rect x="861" y="564" width="15" height="5" fill="#f0f"/>
<text x="903" y="568.2" fill="#f0f" font-size="6" font-family="'Liberation Sans','Noto Sans CJK SC',sans-serif" text-anchor="middle" font-weight="bold">1</text>
<text x="931" y="568.2" fill="#f0f" font-size="6" font-family="'Liberation Sans','Noto Sans CJK SC',sans-serif" text-anchor="middle" font-weight="bold" textLength="10" lengthAdjust="spacingAndGlyphs">45<tspan font-size="5.4">钢</tspan></text>
<path d="M787 570.5H1004" stroke="#f0f" stroke-width="1"/>
<text x="792.5" y="576.2" fill="#f0f" font-size="6" font-family="'Liberation Sans','Noto Sans CJK SC',sans-serif" text-anchor="middle" font-weight="bold">8</text>
<text x="800.5" y="576.2" fill="#f0f" font-size="6" font-family="'Liberation Sans','Noto Sans CJK SC',sans-serif" text-anchor="start" font-weight="bold" textLength="15" lengthAdjust="spacingAndGlyphs">MJ-05</text>
<rect x="860" y="572" width="6" height="5" fill="#f0f"/>
<rect x="871" y="572" width="6" height="5" fill="#f0f"/>
<text x="903" y="576.2" fill="#f0f" font-size="6" font-family="'Liberation Sans','Noto Sans CJK SC',sans-serif" text-anchor="middle" font-weight="bold">1</text>
<text x="931" y="576.2" fill="#f0f" font-size="6" font-family="'Liberation Sans','Noto Sans CJK SC',sans-serif" text-anchor="middle" font-weight="bold" textLength="22" lengthAdjust="spacingAndGlyphs">Cr12MoV</text>
<path d="M787 578.5H1004" stroke="#f0f" stroke-width="1"/>
<text x="792.5" y="584.2" fill="#f0f" font-size="6" font-family="'Liberation Sans','Noto Sans CJK SC',sans-serif" text-anchor="middle" font-weight="bold">7</text>
<text x="800.5" y="584.2" fill="#f0f" font-size="6" font-family="'Liberation Sans','Noto Sans CJK SC',sans-serif" text-anchor="start" font-weight="bold" textLength="15" lengthAdjust="spacingAndGlyphs">MJ-04</text>
<rect x="862" y="580" width="14" height="5" fill="#f0f"/>
<text x="903" y="584.2" fill="#f0f" font-size="6" font-family="'Liberation Sans','Noto Sans CJK SC',sans-serif" text-anchor="middle" font-weight="bold">1</text>
<text x="931" y="584.2" fill="#f0f" font-size="6" font-family="'Liberation Sans','Noto Sans CJK SC',sans-serif" text-anchor="middle" font-weight="bold" textLength="10" lengthAdjust="spacingAndGlyphs">45<tspan font-size="5.4">钢</tspan></text>
<path d="M787 586.5H1004" stroke="#f0f" stroke-width="1"/>
<text x="792.5" y="593.2" fill="#f0f" font-size="6" font-family="'Liberation Sans','Noto Sans CJK SC',sans-serif" text-anchor="middle" font-weight="bold">6</text>
<text x="800.5" y="593.2" fill="#f0f" font-size="6" font-family="'Liberation Sans','Noto Sans CJK SC',sans-serif" text-anchor="start" font-weight="bold" textLength="15" lengthAdjust="spacingAndGlyphs">MJ-03</text>
<rect x="859" y="589" width="19" height="5" fill="#f0f"/>
<text x="903" y="593.2" fill="#f0f" font-size="6" font-family="'Liberation Sans','Noto Sans CJK SC',sans-serif" text-anchor="middle" font-weight="bold">1</text>
<text x="931" y="593.2" fill="#f0f" font-size="6" font-family="'Liberation Sans','Noto Sans CJK SC',sans-serif" text-anchor="middle" font-weight="bold" textLength="22" lengthAdjust="spacingAndGlyphs">Cr12MoV</text>
<path d="M787 595.5H1004" stroke="#f0f" stroke-width="1"/>
<text x="792.5" y="601.2" fill="#f0f" font-size="6" font-family="'Liberation Sans','Noto Sans CJK SC',sans-serif" text-anchor="middle" font-weight="bold">5</text>
<text x="800.5" y="601.2" fill="#f0f" font-size="6" font-family="'Liberation Sans','Noto Sans CJK SC',sans-serif" text-anchor="start" font-weight="bold" textLength="15" lengthAdjust="spacingAndGlyphs">MJ-02</text>
<rect x="857" y="597" width="24" height="5" fill="#f0f"/>
<text x="903" y="601.2" fill="#f0f" font-size="6" font-family="'Liberation Sans','Noto Sans CJK SC',sans-serif" text-anchor="middle" font-weight="bold">1</text>
<text x="931" y="601.2" fill="#f0f" font-size="6" font-family="'Liberation Sans','Noto Sans CJK SC',sans-serif" text-anchor="middle" font-weight="bold" textLength="10" lengthAdjust="spacingAndGlyphs">45<tspan font-size="5.4">钢</tspan></text>
<path d="M787 603.5H1004" stroke="#f0f" stroke-width="1"/>
<text x="792.5" y="610.2" fill="#f0f" font-size="6" font-family="'Liberation Sans','Noto Sans CJK SC',sans-serif" text-anchor="middle" font-weight="bold">4</text>
<text x="800.5" y="610.2" fill="#f0f" font-size="6" font-family="'Liberation Sans','Noto Sans CJK SC',sans-serif" text-anchor="start" font-weight="bold" textLength="15" lengthAdjust="spacingAndGlyphs">MJ-01</text>
<rect x="861" y="606" width="15" height="5" fill="#f0f"/>
<text x="903" y="610.2" fill="#f0f" font-size="6" font-family="'Liberation Sans','Noto Sans CJK SC',sans-serif" text-anchor="middle" font-weight="bold">1</text>
<text x="931" y="610.2" fill="#f0f" font-size="6" font-family="'Liberation Sans','Noto Sans CJK SC',sans-serif" text-anchor="middle" font-weight="bold" textLength="10" lengthAdjust="spacingAndGlyphs">45<tspan font-size="5.4">钢</tspan></text>
<path d="M787 612.5H1004" stroke="#f0f" stroke-width="1"/>
<text x="792.5" y="618.2" fill="#f0f" font-size="6" font-family="'Liberation Sans','Noto Sans CJK SC',sans-serif" text-anchor="middle" font-weight="bold">3</text>
<text x="798.5" y="618.2" fill="#f0f" font-size="6" font-family="'Liberation Sans','Noto Sans CJK SC',sans-serif" text-anchor="start" font-weight="bold" textLength="46" lengthAdjust="spacingAndGlyphs">GB/T2089-1980</text>
<rect x="861" y="614" width="6" height="5" fill="#f0f"/>
<rect x="872" y="614" width="6" height="5" fill="#f0f"/>
<text x="903" y="618.2" fill="#f0f" font-size="6" font-family="'Liberation Sans','Noto Sans CJK SC',sans-serif" text-anchor="middle" font-weight="bold">4</text>
<text x="931" y="618.2" fill="#f0f" font-size="6" font-family="'Liberation Sans','Noto Sans CJK SC',sans-serif" text-anchor="middle" font-weight="bold" textLength="10" lengthAdjust="spacingAndGlyphs">35<tspan font-size="5.4">钢</tspan></text>
<path d="M787 620.5H1004" stroke="#f0f" stroke-width="1"/>
<text x="792.5" y="626.2" fill="#f0f" font-size="6" font-family="'Liberation Sans','Noto Sans CJK SC',sans-serif" text-anchor="middle" font-weight="bold">2</text>
<text x="798.5" y="626.2" fill="#f0f" font-size="6" font-family="'Liberation Sans','Noto Sans CJK SC',sans-serif" text-anchor="start" font-weight="bold" textLength="44" lengthAdjust="spacingAndGlyphs">GB/T5782-1997</text>
<rect x="857" y="622" width="24" height="5" fill="#f0f"/>
<text x="903" y="626.2" fill="#f0f" font-size="6" font-family="'Liberation Sans','Noto Sans CJK SC',sans-serif" text-anchor="middle" font-weight="bold">3</text>
<text x="931" y="626.2" fill="#f0f" font-size="6" font-family="'Liberation Sans','Noto Sans CJK SC',sans-serif" text-anchor="middle" font-weight="bold" textLength="13" lengthAdjust="spacingAndGlyphs">65Mn</text>
<path d="M787 628.5H1004" stroke="#f0f" stroke-width="1"/>
<text x="792.5" y="635.2" fill="#f0f" font-size="6" font-family="'Liberation Sans','Noto Sans CJK SC',sans-serif" text-anchor="middle" font-weight="bold">1</text>
<text x="798.5" y="635.2" fill="#f0f" font-size="6" font-family="'Liberation Sans','Noto Sans CJK SC',sans-serif" text-anchor="start" font-weight="bold" textLength="7" lengthAdjust="spacingAndGlyphs">10#</text>
<rect x="805" y="632" width="36" height="4" fill="#f0f"/>
<rect x="861" y="631" width="15" height="5" fill="#f0f"/>
<text x="903" y="635.2" fill="#f0f" font-size="6" font-family="'Liberation Sans','Noto Sans CJK SC',sans-serif" text-anchor="middle" font-weight="bold">1</text>
<text x="931" y="635.2" fill="#f0f" font-size="6" font-family="'Liberation Sans','Noto Sans CJK SC',sans-serif" text-anchor="middle" font-weight="bold" textLength="16" lengthAdjust="spacingAndGlyphs">HT200</text>
<path d="M787 637.5H1004" stroke="#f0f" stroke-width="1"/>
<path d="M787 443.5H1004" stroke="#fff" stroke-width="1"/>
<path d="M787.5 443V722" stroke="#fff" stroke-width="1"/>
<path d="M797.5 443V655" stroke="#fff" stroke-width="1"/>
<path d="M845.5 443V655" stroke="#fff" stroke-width="1"/>
<path d="M898.5 443V655" stroke="#fff" stroke-width="1"/>
<path d="M907.5 443V655" stroke="#fff" stroke-width="1"/>
<path d="M953.5 443V655" stroke="#fff" stroke-width="1"/>
<path d="M965.5 443V646" stroke="#fff" stroke-width="1"/>
<path d="M979.5 443V655" stroke="#fff" stroke-width="1"/>
<path d="M787 654.5H1004" stroke="#fff" stroke-width="1"/>
<path d="M953 645.5H980" stroke="#fff" stroke-width="1"/>
<text x="792.5" y="644" fill="#0f0" font-size="5.3" font-family="'Liberation Sans','Noto Sans CJK SC',sans-serif" text-anchor="middle">序</text>
<text x="792.5" y="651.5" fill="#0f0" font-size="5.3" font-family="'Liberation Sans','Noto Sans CJK SC',sans-serif" text-anchor="middle">号</text>
<text x="808.5" y="648.5" fill="#0f0" font-size="5.3" font-family="'Liberation Sans','Noto Sans CJK SC',sans-serif" text-anchor="middle">代</text>
<text x="829" y="648.5" fill="#0f0" font-size="5.3" font-family="'Liberation Sans','Noto Sans CJK SC',sans-serif" text-anchor="middle">号</text>
<text x="861.5" y="648.5" fill="#0f0" font-size="5.3" font-family="'Liberation Sans','Noto Sans CJK SC',sans-serif" text-anchor="middle">名</text>
<text x="883" y="648.5" fill="#0f0" font-size="5.3" font-family="'Liberation Sans','Noto Sans CJK SC',sans-serif" text-anchor="middle">称</text>
<text x="903" y="644" fill="#0f0" font-size="5.3" font-family="'Liberation Sans','Noto Sans CJK SC',sans-serif" text-anchor="middle">数</text>
<text x="903" y="651.5" fill="#0f0" font-size="5.3" font-family="'Liberation Sans','Noto Sans CJK SC',sans-serif" text-anchor="middle">量</text>
<text x="922" y="648.5" fill="#0f0" font-size="5.3" font-family="'Liberation Sans','Noto Sans CJK SC',sans-serif" text-anchor="middle">材</text>
<text x="937" y="648.5" fill="#0f0" font-size="5.3" font-family="'Liberation Sans','Noto Sans CJK SC',sans-serif" text-anchor="middle">料</text>
<text x="959.5" y="643.5" fill="#0f0" font-size="5" font-family="'Liberation Sans','Noto Sans CJK SC',sans-serif" text-anchor="middle" textLength="10" lengthAdjust="spacingAndGlyphs">单件</text>
<text x="972.5" y="643.5" fill="#0f0" font-size="5" font-family="'Liberation Sans','Noto Sans CJK SC',sans-serif" text-anchor="middle" textLength="10" lengthAdjust="spacingAndGlyphs">总计</text>
<text x="961" y="652.5" fill="#0f0" font-size="5.3" font-family="'Liberation Sans','Noto Sans CJK SC',sans-serif" text-anchor="middle">重</text>
<text x="973" y="652.5" fill="#0f0" font-size="5.3" font-family="'Liberation Sans','Noto Sans CJK SC',sans-serif" text-anchor="middle">量</text>
<text x="983" y="648.5" fill="#0f0" font-size="5.3" font-family="'Liberation Sans','Noto Sans CJK SC',sans-serif" text-anchor="middle">备</text>
<text x="999" y="648.5" fill="#0f0" font-size="5.3" font-family="'Liberation Sans','Noto Sans CJK SC',sans-serif" text-anchor="middle">注</text>
<path d="M788 662.5H884" stroke="#f0f" stroke-width="1"/>
<path d="M788 670.5H884" stroke="#f0f" stroke-width="1"/>
<path d="M788 678.5H884" stroke="#f0f" stroke-width="1"/>
<path d="M799.5 654V688" stroke="#f0f" stroke-width="1"/>
<path d="M811.5 654V688" stroke="#f0f" stroke-width="1"/>
<path d="M826.5 654V688" stroke="#f0f" stroke-width="1"/>
<path d="M850.5 654V688" stroke="#f0f" stroke-width="1"/>
<path d="M864.5 654V688" stroke="#f0f" stroke-width="1"/>
<path d="M787 687.5H884" stroke="#fff" stroke-width="1"/>
<path d="M788 695.5H884" stroke="#f0f" stroke-width="1"/>
<path d="M788 704.5H884" stroke="#f0f" stroke-width="1"/>
<path d="M788 712.5H884" stroke="#f0f" stroke-width="1"/>
<path d="M801.5 688V721" stroke="#f0f" stroke-width="1"/>
<path d="M816.5 688V721" stroke="#f0f" stroke-width="1"/>
<path d="M835.5 688V721" stroke="#f0f" stroke-width="1"/>
<path d="M850.5 688V721" stroke="#f0f" stroke-width="1"/>
<path d="M864.5 688V721" stroke="#f0f" stroke-width="1"/>
<path d="M883.5 654V722" stroke="#fff" stroke-width="1"/>
<rect x="788" y="681" width="10" height="5" fill="#0f0"/>
<rect x="800" y="681" width="10" height="5" fill="#0f0"/>
<rect x="814" y="681" width="9" height="5" fill="#0f0"/>
<rect x="826" y="681" width="23" height="5" fill="#0f0"/>
<rect x="853" y="681" width="9" height="5" fill="#0f0"/>
<rect x="864" y="681" width="5" height="5" fill="#0f0"/>
<rect x="871" y="681" width="6" height="5" fill="#0f0"/>
<rect x="879" y="681" width="5" height="5" fill="#0f0"/>
<rect x="789" y="690" width="9" height="4" fill="#0f0"/>
<rect x="835" y="690" width="14" height="5" fill="#0f0"/>
<rect x="838" y="698" width="9" height="4" fill="#0f0"/>
<rect x="789" y="706" width="9" height="5" fill="#0f0"/>
<rect x="838" y="706" width="9" height="5" fill="#0f0"/>
<rect x="789" y="714" width="9" height="5" fill="#0f0"/>
<rect x="838" y="714" width="9" height="5" fill="#0f0"/>
<path d="M943.5 654V722" stroke="#fff" stroke-width="1"/>
<path d="M883 687.5H944" stroke="#fff" stroke-width="1"/>
<text x="913.3" y="672.9" fill="#f0f" font-size="8" font-family="'Liberation Sans','Noto Sans CJK SC',sans-serif" text-anchor="middle" textLength="41.5" lengthAdjust="spacingAndGlyphs">10# t=2.0</text>
<path d="M883 699.5H944" stroke="#f0f" stroke-width="1"/>
<path d="M883 710.5H944" stroke="#fff" stroke-width="1"/>
<path d="M914.5 688V710" stroke="#f0f" stroke-width="1"/>
<path d="M929.5 687V711" stroke="#f0f" stroke-width="1"/>
<path d="M891.5 699V711" stroke="#f0f" stroke-width="1"/>
<path d="M899.5 699V711" stroke="#f0f" stroke-width="1"/>
<path d="M907.5 699V711" stroke="#f0f" stroke-width="1"/>
<rect x="885" y="692" width="5" height="5" fill="#0f0"/>
<rect x="892" y="692" width="5" height="5" fill="#0f0"/>
<rect x="900" y="692" width="5" height="5" fill="#0f0"/>
<rect x="907" y="692" width="6" height="5" fill="#0f0"/>
<rect x="917" y="691" width="10" height="5" fill="#0f0"/>
<rect x="931" y="691" width="9" height="5" fill="#0f0"/>
<text x="937.2" y="708.2" fill="#0f0" font-size="7.2" font-family="'Liberation Sans','Noto Sans CJK SC',sans-serif" text-anchor="middle" font-weight="bold" textLength="10" lengthAdjust="spacingAndGlyphs">1:1</text>
<text x="885.5" y="718.6" fill="#0f0" font-size="5.2" font-family="'Liberation Sans','Noto Sans CJK SC',sans-serif" text-anchor="start">共</text>
<text x="896" y="718.8" fill="#0f0" font-size="6.6" font-family="'Liberation Sans','Noto Sans CJK SC',sans-serif" text-anchor="start" font-weight="bold">14</text>
<text x="906" y="718.6" fill="#0f0" font-size="5.2" font-family="'Liberation Sans','Noto Sans CJK SC',sans-serif" text-anchor="start">张</text>
<text x="918" y="718.6" fill="#0f0" font-size="5.2" font-family="'Liberation Sans','Noto Sans CJK SC',sans-serif" text-anchor="start">第</text>
<text x="926.5" y="718.8" fill="#0f0" font-size="6.6" font-family="'Liberation Sans','Noto Sans CJK SC',sans-serif" text-anchor="start" font-weight="bold">01</text>
<text x="936" y="718.6" fill="#0f0" font-size="5.2" font-family="'Liberation Sans','Noto Sans CJK SC',sans-serif" text-anchor="start">张</text>
<path d="M943 675.5H1004" stroke="#fff" stroke-width="1"/>
<path d="M943 699.5H1004" stroke="#fff" stroke-width="1"/>
<text x="973.5" y="691.2" fill="#f0f" font-size="7.8" font-family="'Liberation Sans','Noto Sans CJK SC',sans-serif" text-anchor="middle" font-weight="500" textLength="38" lengthAdjust="spacingAndGlyphs">冲孔翻孔模</text>
<text x="976.5" y="713" fill="#f0f" font-size="8.2" font-family="'Liberation Sans','Noto Sans CJK SC',sans-serif" text-anchor="middle" textLength="27" lengthAdjust="spacingAndGlyphs">MJ-00</text>
</svg>
</body></html>
